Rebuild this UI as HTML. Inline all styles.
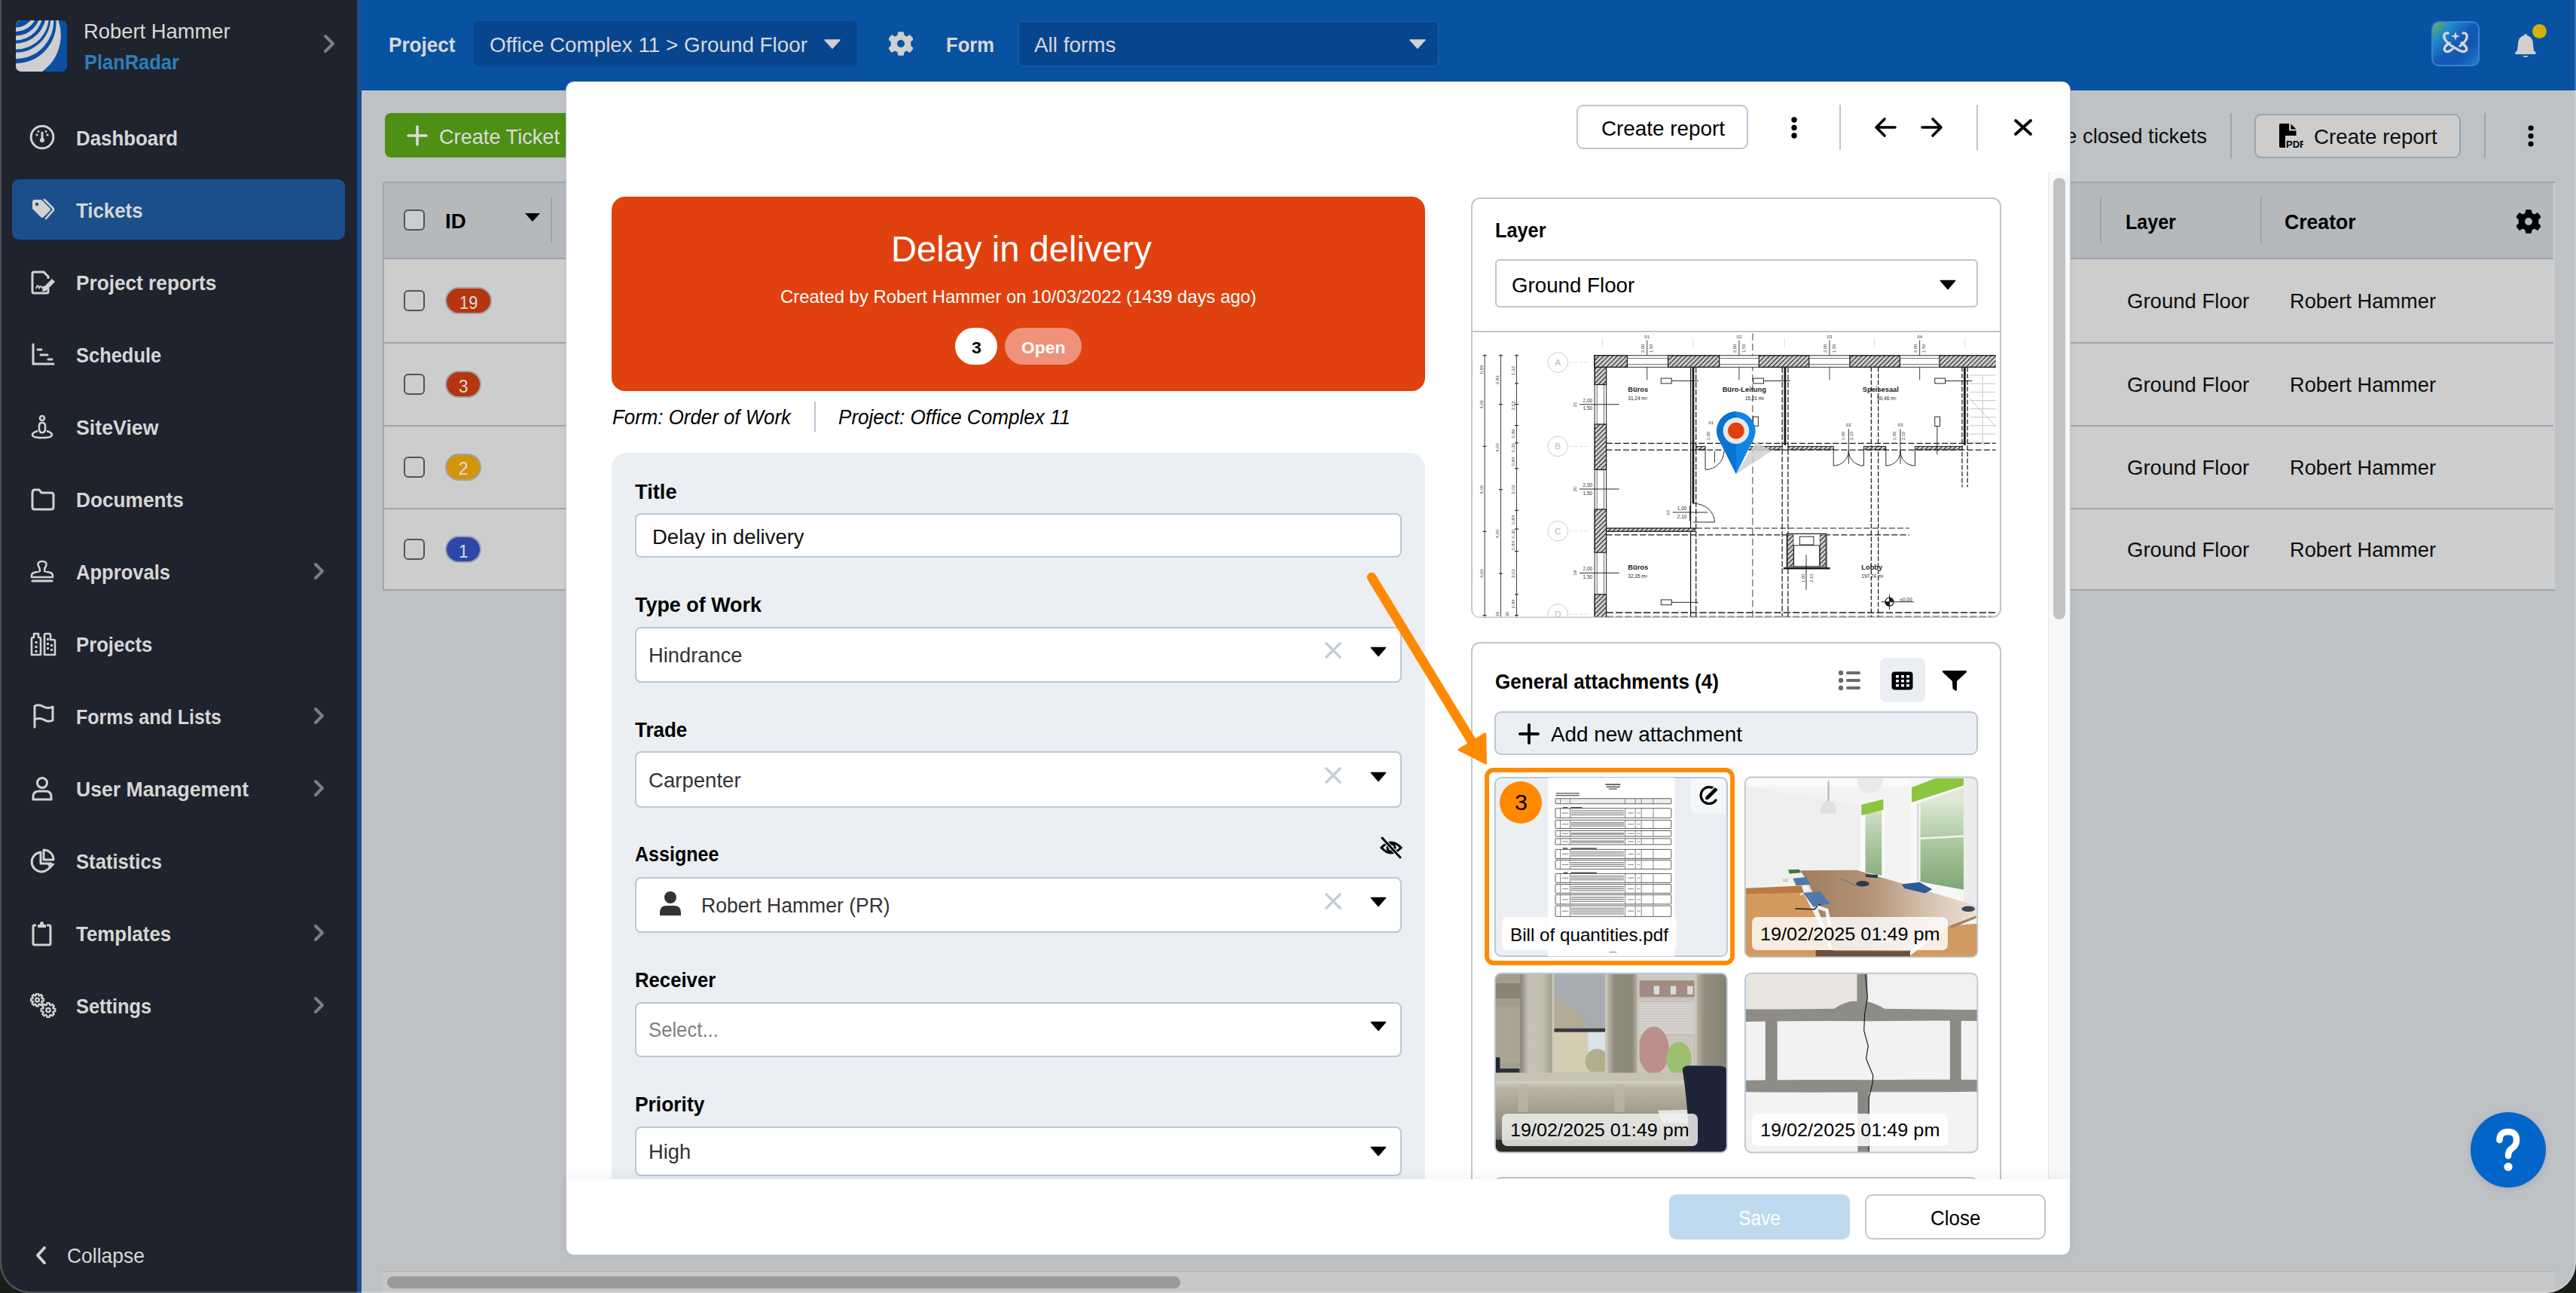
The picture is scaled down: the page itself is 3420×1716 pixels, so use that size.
<!DOCTYPE html>
<html><head><meta charset="utf-8"><style>
html,body{margin:0;padding:0;}
body{width:3420px;height:1716px;overflow:hidden;position:relative;background:#1b1d17;font-family:"Liberation Sans", sans-serif;}
.a{position:absolute;box-sizing:border-box;}
.t{position:absolute;white-space:nowrap;transform-origin:left top;}
</style></head><body>
<div class="a" style="left:0;top:0;width:3420px;height:1716px;background:#bec2c5;border-radius:0 0 40px 40px;overflow:hidden;">
<div class="a" style="left:0px;top:0px;width:474px;height:1716px;background:#1f232d;"></div>
<div class="a" style="left:474px;top:0px;width:6px;height:1716px;background:#184f8c;"></div>
<div class="a" style="left:480px;top:0px;width:2940px;height:120px;background:#0852a2;"></div>
<svg class="a" style="left:21px;top:27px;" width="68" height="68" viewBox="0 0 68 68"><defs><clipPath id="lg"><rect x="0" y="0" width="68" height="68" rx="7"/></clipPath></defs><g clip-path="url(#lg)"><rect width="68" height="68" fill="#0a4fa3"/><circle cx="0" cy="19.5" r="59.8" fill="#cfcfcf"/><circle cx="0" cy="3.6" r="53.6" fill="#0a4fa3"/><circle cx="0" cy="0.9" r="50.2" fill="#cfcfcf"/><circle cx="0" cy="-3.76" r="46.5" fill="#0a4fa3"/><circle cx="0" cy="-5.4" r="43.9" fill="#cfcfcf"/><circle cx="0" cy="-9.56" r="40.2" fill="#0a4fa3"/><circle cx="0" cy="-8.96" r="35.4" fill="#cfcfcf"/><circle cx="0" cy="-12.3" r="32.7" fill="#0a4fa3"/><circle cx="0" cy="-13.2" r="28.2" fill="#cfcfcf"/><circle cx="0" cy="-15.7" r="25.2" fill="#0a4fa3"/></g></svg>
<div class="t" id="t0" style="left:111.0px;top:28.0px;font-size:28px;line-height:28px;font-weight:400;color:#d8d8d8;transform:scaleX(0.9770);">Robert Hammer</div>
<div class="t" id="t1" style="left:111.8px;top:69.0px;font-size:28px;line-height:28px;font-weight:700;color:#2a80bb;transform:scaleX(0.9083);">PlanRadar</div>
<svg class="a" style="left:424px;top:44px;" width="26" height="28" viewBox="0 0 26 28"><path d="M8 4 L18 14 L8 24" fill="none" stroke="#7b7e86" stroke-width="4" stroke-linecap="round" stroke-linejoin="round"/></svg>
<div class="a" style="left:16px;top:238px;width:442px;height:80px;background:#1a4f8c;border-radius:9px;"></div>
<svg class="a" style="left:39px;top:165.5px;" width="36" height="34" viewBox="0 0 34 34"><circle cx="16" cy="16" r="14.8" fill="none" stroke="#d2d2d2" stroke-width="3"/><line x1="16" y1="10" x2="16" y2="19" stroke="#d2d2d2" stroke-width="3" stroke-linecap="round"/><circle cx="16" cy="20" r="3" fill="#d2d2d2"/><circle cx="9" cy="13" r="1.6" fill="#d2d2d2"/><circle cx="23" cy="13" r="1.6" fill="#d2d2d2"/><circle cx="11" cy="8.5" r="1.4" fill="#d2d2d2"/><circle cx="21" cy="8.5" r="1.4" fill="#d2d2d2"/></svg>
<div class="t" id="t2" style="left:100.6px;top:169.8px;font-size:28px;line-height:28px;font-weight:700;color:#d6d6d6;transform:scaleX(0.9231);">Dashboard</div>
<svg class="a" style="left:39px;top:261.5px;" width="36" height="34" viewBox="0 0 34 34"><path d="M3 6 Q3 3 6 3 L15 3 L26 14 Q28 16 26 18 L18 26 Q16 28 14 26 L3 15 Z" fill="#d2d2d2"/><circle cx="9" cy="9" r="2.2" fill="#1a4f8c"/><path d="M19 3 L30 14 Q32 16 30 18 L21 28" fill="none" stroke="#d2d2d2" stroke-width="2.6" stroke-linecap="round"/></svg>
<div class="t" id="t3" style="left:100.6px;top:265.8px;font-size:28px;line-height:28px;font-weight:700;color:#d6d6d6;transform:scaleX(0.9229);">Tickets</div>
<svg class="a" style="left:39px;top:357.5px;" width="36" height="34" viewBox="0 0 34 34"><path d="M18 3 L5 3 Q3 3 3 5 L3 29 Q3 31 5 31 L22 31 Q24 31 24 29 L24 25" fill="none" stroke="#d2d2d2" stroke-width="3" stroke-linecap="round"/><path d="M18 3 L24 9 L24 12" fill="none" stroke="#d2d2d2" stroke-width="3"/><path d="M8 25 Q10 18 12 24 Q14 20 16 24 L19 22" fill="none" stroke="#d2d2d2" stroke-width="2"/><path d="M17 24 L29 12 L33 16 L21 28 L16 29 Z" fill="#d2d2d2"/></svg>
<div class="t" id="t4" style="left:100.6px;top:361.8px;font-size:28px;line-height:28px;font-weight:700;color:#d6d6d6;transform:scaleX(0.9359);">Project reports</div>
<svg class="a" style="left:39px;top:453.5px;" width="36" height="34" viewBox="0 0 34 34"><path d="M4 3 L4 29 L31 29" fill="none" stroke="#d2d2d2" stroke-width="3" stroke-linecap="round"/><line x1="10" y1="10" x2="15" y2="10" stroke="#d2d2d2" stroke-width="3" stroke-linecap="round"/><line x1="14" y1="17" x2="23" y2="17" stroke="#d2d2d2" stroke-width="3" stroke-linecap="round"/><line x1="24" y1="23" x2="29" y2="23" stroke="#d2d2d2" stroke-width="3" stroke-linecap="round"/></svg>
<div class="t" id="t5" style="left:100.6px;top:457.8px;font-size:28px;line-height:28px;font-weight:700;color:#d6d6d6;transform:scaleX(0.9094);">Schedule</div>
<svg class="a" style="left:39px;top:549.5px;" width="36" height="34" viewBox="0 0 34 34"><circle cx="16" cy="5" r="3" fill="none" stroke="#d2d2d2" stroke-width="2.6"/><path d="M12 21 L12 15 Q12 11 16 11 Q20 11 20 15 L20 21 L18 24 L14 24 Z" fill="none" stroke="#d2d2d2" stroke-width="2.6"/><path d="M10 22 Q3 24 3 27 Q3 31 16 31 Q29 31 29 27 Q29 24 22 22" fill="none" stroke="#d2d2d2" stroke-width="2.6"/></svg>
<div class="t" id="t6" style="left:100.6px;top:553.8px;font-size:28px;line-height:28px;font-weight:700;color:#d6d6d6;transform:scaleX(0.9550);">SiteView</div>
<svg class="a" style="left:39px;top:645.5px;" width="36" height="34" viewBox="0 0 34 34"><path d="M3 8 Q3 4 6 4 L12 4 L15 8 L28 8 Q31 8 31 11 L31 27 Q31 30 28 30 L6 30 Q3 30 3 27 Z" fill="none" stroke="#d2d2d2" stroke-width="3" stroke-linejoin="round"/></svg>
<div class="t" id="t7" style="left:100.6px;top:649.8px;font-size:28px;line-height:28px;font-weight:700;color:#d6d6d6;transform:scaleX(0.9372);">Documents</div>
<svg class="a" style="left:39px;top:741.5px;" width="36" height="34" viewBox="0 0 34 34"><path d="M13 16 Q13 12 11 9 Q9 3 16 3 Q23 3 21 9 Q19 12 19 16 L27 18 Q30 19 30 22 L30 24 L2 24 L2 22 Q2 19 5 18 Z" fill="none" stroke="#d2d2d2" stroke-width="2.6" stroke-linejoin="round"/><line x1="3" y1="29" x2="29" y2="29" stroke="#d2d2d2" stroke-width="3" stroke-linecap="round"/></svg>
<div class="t" id="t8" style="left:100.6px;top:745.8px;font-size:28px;line-height:28px;font-weight:700;color:#d6d6d6;transform:scaleX(0.9136);">Approvals</div>
<svg class="a" style="left:410px;top:745.5px;" width="26" height="26" viewBox="0 0 26 26"><path d="M9 3 L18 12 L9 21" fill="none" stroke="#7b7e86" stroke-width="4" stroke-linecap="round" stroke-linejoin="round"/></svg>
<svg class="a" style="left:39px;top:837.5px;" width="36" height="34" viewBox="0 0 34 34"><path d="M2 31 L2 10 Q2 8 4 8 L5 8 L5 3 L11 3 L11 8 L12 8 Q14 8 14 10 L14 31 Z" fill="none" stroke="#d2d2d2" stroke-width="2.6" stroke-linejoin="round"/><path d="M19 31 L19 5 Q19 3 21 3 L25 3 Q27 3 27 5 L27 11 L31 11 Q33 11 33 13 L33 31 Z" fill="none" stroke="#d2d2d2" stroke-width="2.6" stroke-linejoin="round"/><g fill="#d2d2d2"><rect x="6.5" y="13" width="3" height="3"/><rect x="6.5" y="19" width="3" height="3"/><rect x="6.5" y="25" width="3" height="3"/><rect x="22" y="9" width="3" height="3"/><rect x="22" y="15" width="3" height="3"/><rect x="22" y="21" width="3" height="3"/><rect x="27" y="17" width="3" height="3"/><rect x="27" y="23" width="3" height="3"/></g></svg>
<div class="t" id="t9" style="left:100.6px;top:841.8px;font-size:28px;line-height:28px;font-weight:700;color:#d6d6d6;transform:scaleX(0.9176);">Projects</div>
<svg class="a" style="left:39px;top:933.5px;" width="36" height="34" viewBox="0 0 34 34"><path d="M6 31 L6 3 Q12 0 18 4 Q24 7 30 4 L30 22 Q24 25 18 21 Q12 18 6 21" fill="none" stroke="#d2d2d2" stroke-width="3" stroke-linecap="round" stroke-linejoin="round"/></svg>
<div class="t" id="t10" style="left:100.6px;top:937.8px;font-size:28px;line-height:28px;font-weight:700;color:#d6d6d6;transform:scaleX(0.8924);">Forms and Lists</div>
<svg class="a" style="left:410px;top:937.5px;" width="26" height="26" viewBox="0 0 26 26"><path d="M9 3 L18 12 L9 21" fill="none" stroke="#7b7e86" stroke-width="4" stroke-linecap="round" stroke-linejoin="round"/></svg>
<svg class="a" style="left:39px;top:1029.5px;" width="36" height="34" viewBox="0 0 34 34"><circle cx="16" cy="9" r="6.5" fill="none" stroke="#d2d2d2" stroke-width="3"/><path d="M4 31 L4 27 Q4 20 12 20 L20 20 Q28 20 28 27 L28 31 Z" fill="none" stroke="#d2d2d2" stroke-width="3" stroke-linejoin="round"/></svg>
<div class="t" id="t11" style="left:100.6px;top:1033.8px;font-size:28px;line-height:28px;font-weight:700;color:#d6d6d6;transform:scaleX(0.9499);">User Management</div>
<svg class="a" style="left:410px;top:1033.5px;" width="26" height="26" viewBox="0 0 26 26"><path d="M9 3 L18 12 L9 21" fill="none" stroke="#7b7e86" stroke-width="4" stroke-linecap="round" stroke-linejoin="round"/></svg>
<svg class="a" style="left:39px;top:1125.5px;" width="36" height="34" viewBox="0 0 34 34"><path d="M14 5 A13 13 0 1 0 28 20 L14 20 Z" fill="none" stroke="#d2d2d2" stroke-width="3" stroke-linejoin="round"/><path d="M18 2 A13 13 0 0 1 31 15 L18 15 Z" fill="none" stroke="#d2d2d2" stroke-width="3" stroke-linejoin="round"/><path d="M22 20 L33 20 L27 27 Z" fill="#d2d2d2"/></svg>
<div class="t" id="t12" style="left:100.6px;top:1129.8px;font-size:28px;line-height:28px;font-weight:700;color:#d6d6d6;transform:scaleX(0.9157);">Statistics</div>
<svg class="a" style="left:39px;top:1221.5px;" width="36" height="34" viewBox="0 0 34 34"><path d="M8 6 L5 6 Q4 6 4 8 L4 30 Q4 32 6 32 L25 32 Q27 32 27 30 L27 8 Q27 6 25 6 L22 6" fill="none" stroke="#d2d2d2" stroke-width="3"/><path d="M10 9 L10 5 L13 5 Q13 1 15.5 1 Q18 1 18 5 L21 5 L21 9 Z" fill="#d2d2d2"/></svg>
<div class="t" id="t13" style="left:100.6px;top:1225.8px;font-size:28px;line-height:28px;font-weight:700;color:#d6d6d6;transform:scaleX(0.9251);">Templates</div>
<svg class="a" style="left:410px;top:1225.5px;" width="26" height="26" viewBox="0 0 26 26"><path d="M9 3 L18 12 L9 21" fill="none" stroke="#7b7e86" stroke-width="4" stroke-linecap="round" stroke-linejoin="round"/></svg>
<svg class="a" style="left:39px;top:1317.5px;" width="36" height="34" viewBox="0 0 34 34"><g fill="none" stroke="#d2d2d2" stroke-width="2.3" stroke-linejoin="round"><path d="M15.43 7.18 L17.87 7.51 L17.87 10.49 L15.43 10.82 L14.98 11.90 L16.47 13.86 L14.36 15.97 L12.40 14.48 L11.32 14.93 L10.99 17.37 L8.01 17.37 L7.68 14.93 L6.60 14.48 L4.64 15.97 L2.53 13.86 L4.02 11.90 L3.57 10.82 L1.13 10.49 L1.13 7.51 L3.57 7.18 L4.02 6.10 L2.53 4.14 L4.64 2.03 L6.60 3.52 L7.68 3.07 L8.01 0.63 L10.99 0.63 L11.32 3.07 L12.40 3.52 L14.36 2.03 L16.47 4.14 L14.98 6.10 Z"/><circle cx="9.5" cy="9" r="2.4"/><path d="M30.69 20.44 L33.35 20.83 L33.35 24.17 L30.69 24.56 L30.19 25.78 L31.79 27.93 L29.43 30.29 L27.28 28.69 L26.06 29.19 L25.67 31.85 L22.33 31.85 L21.94 29.19 L20.72 28.69 L18.57 30.29 L16.21 27.93 L17.81 25.78 L17.31 24.56 L14.65 24.17 L14.65 20.83 L17.31 20.44 L17.81 19.22 L16.21 17.07 L18.57 14.71 L20.72 16.31 L21.94 15.81 L22.33 13.15 L25.67 13.15 L26.06 15.81 L27.28 16.31 L29.43 14.71 L31.79 17.07 L30.19 19.22 Z"/><circle cx="24" cy="22.5" r="2.7"/></g></svg>
<div class="t" id="t14" style="left:100.6px;top:1321.8px;font-size:28px;line-height:28px;font-weight:700;color:#d6d6d6;transform:scaleX(0.9070);">Settings</div>
<svg class="a" style="left:410px;top:1321.5px;" width="26" height="26" viewBox="0 0 26 26"><path d="M9 3 L18 12 L9 21" fill="none" stroke="#7b7e86" stroke-width="4" stroke-linecap="round" stroke-linejoin="round"/></svg>
<svg class="a" style="left:42px;top:1652px;" width="26" height="28" viewBox="0 0 26 28"><path d="M17 4 L8 14 L17 24" fill="none" stroke="#d2d2d2" stroke-width="4" stroke-linecap="round" stroke-linejoin="round"/></svg>
<div class="t" id="t15" style="left:88.5px;top:1653.1px;font-size:28px;line-height:28px;font-weight:400;color:#d6d6d6;transform:scaleX(0.9444);">Collapse</div>
<div class="t" id="t16" style="left:515.6px;top:46.3px;font-size:28px;line-height:28px;font-weight:700;color:#d8d8d8;transform:scaleX(0.9311);">Project</div>
<div class="a" style="left:629px;top:28px;width:509px;height:60px;background:#08458f;border-radius:6px;"></div>
<div class="t" id="t17" style="left:650.0px;top:45.8px;font-size:28px;line-height:28px;font-weight:400;color:#d8d8d8;transform:scaleX(0.9939);">Office Complex 11 &gt; Ground Floor</div>
<svg class="a" style="left:1094px;top:52px;" width="22" height="14" viewBox="0 0 22 14"><path d="M1 1 L21 1 L11 12 Z" fill="#d0d0d0" stroke="#d0d0d0" stroke-width="1.5" stroke-linejoin="round"/></svg>
<svg class="a" style="left:1180px;top:42px;" width="32" height="32" viewBox="0 0 32 32"><g transform="translate(16,16)"><path d="M-3 -15 L3 -15 L4 -10.5 L8 -8.5 L12 -11 L16 -6 L12.5 -3 L12.5 3 L16 6 L12 11 L8 8.5 L4 10.5 L3 15 L-3 15 L-4 10.5 L-8 8.5 L-12 11 L-16 6 L-12.5 3 L-12.5 -3 L-16 -6 L-12 -11 L-8 -8.5 L-4 -10.5 Z" fill="#d0d0d0" stroke="#d0d0d0" stroke-width="1.5" stroke-linejoin="round"/><circle r="5" fill="#0a52a3"/></g></svg>
<div class="t" id="t18" style="left:1256.0px;top:46.3px;font-size:28px;line-height:28px;font-weight:700;color:#d8d8d8;transform:scaleX(0.9143);">Form</div>
<div class="a" style="left:1352px;top:28px;width:558px;height:60px;background:#08458f;border:1.5px solid #1f5ea8;border-radius:6px;"></div>
<div class="t" id="t19" style="left:1373.0px;top:45.8px;font-size:28px;line-height:28px;font-weight:400;color:#d8d8d8;transform:scaleX(0.9954);">All forms</div>
<svg class="a" style="left:1871px;top:52px;" width="22" height="14" viewBox="0 0 22 14"><path d="M1 1 L21 1 L11 12 Z" fill="#d0d0d0" stroke="#d0d0d0" stroke-width="1.5" stroke-linejoin="round"/></svg>
<div class="a" style="left:3228px;top:28px;width:64px;height:60px;background:linear-gradient(135deg,#6bb552 0%,#1e88cf 25%,#1259b5 50%,#1259b5 72%,#1f7ccc 100%);border:2px solid #3d7fd5;border-radius:10px;"></div>
<svg class="a" style="left:3240px;top:38px;" width="40" height="40" viewBox="0 0 40 40"><g fill="none" stroke="#d6d6d6" stroke-width="3.4" stroke-linecap="round"><path d="M10 6 Q4 5 5 12 Q7 19 20 26 Q31 33 34 29 Q37 25 28 19"/><path d="M30 6 Q36 5 35 12 Q34 17 26 23 M16 27 Q9 33 6 29 Q3 25 12 19"/></g><path d="M20 4 L21.5 8.5 L26 10 L21.5 11.5 L20 16 L18.5 11.5 L14 10 L18.5 8.5 Z" fill="#d6d6d6"/></svg>
<svg class="a" style="left:3337px;top:42px;" width="32" height="34" viewBox="0 0 32 34"><path d="M16 3 Q18 3 18 5 Q26 7 26 17 L27 25 L30 28 Q30 30 28 30 L4 30 Q2 30 2 28 L5 25 L6 17 Q6 7 14 5 Q14 3 16 3 Z" fill="#d0d0d0"/><path d="M12 32 Q16 36 20 32 Z" fill="#d0d0d0"/></svg>
<div class="a" style="left:3362px;top:32px;width:19px;height:19px;border-radius:50%;background:#d2b10c;"></div>
<div class="a" style="left:510.6px;top:150px;width:320px;height:59px;background:#4e8f16;border-radius:8px;"></div>
<svg class="a" style="left:540px;top:166px;" width="28" height="28" viewBox="0 0 28 28"><path d="M14 2 L14 26 M2 14 L26 14" stroke="#dcdcdc" stroke-width="3.6" stroke-linecap="round"/></svg>
<div class="t" id="t20" style="left:582.7px;top:168.0px;font-size:28px;line-height:28px;font-weight:400;color:#dcdcdc;transform:scaleX(0.9700);">Create Ticket</div>
<div class="a" style="left:508px;top:241px;width:2884px;height:543px;background:#cdcdcd;border:2px solid #9aa5b0;border-right:none;border-top-left-radius:4px;"></div>
<div class="a" style="left:510px;top:243px;width:2880px;height:99px;background:#b5b9bc;"></div>
<div class="a" style="left:510px;top:342px;width:2880px;height:2px;background:#9aa5b0;"></div>
<div class="a" style="left:510px;top:454px;width:2880px;height:2px;background:#9aa5b0;"></div>
<div class="a" style="left:510px;top:564px;width:2880px;height:2px;background:#9aa5b0;"></div>
<div class="a" style="left:510px;top:673.5px;width:2880px;height:2px;background:#9aa5b0;"></div>
<div class="a" style="left:536px;top:278px;width:28px;height:28px;border:2.5px solid #4b5560;border-radius:6px;background:#cdcdcd;"></div>
<div class="t" id="t21" style="left:591.4px;top:280.3px;font-size:28px;line-height:28px;font-weight:700;color:#000;transform:scaleX(0.9893);">ID</div>
<svg class="a" style="left:696px;top:282px;" width="22" height="13" viewBox="0 0 22 13"><path d="M1 1 L21 1 L11 12 Z" fill="#000"/></svg>
<div class="a" style="left:730.5px;top:262px;width:2px;height:60px;background:#9aa5b0;"></div>
<div class="a" style="left:2787.5px;top:262px;width:2px;height:60px;background:#9aa5b0;"></div>
<div class="a" style="left:3001px;top:262px;width:2px;height:60px;background:#9aa5b0;"></div>
<div class="t" id="t22" style="left:2821.6px;top:280.5px;font-size:28px;line-height:28px;font-weight:700;color:#000;transform:scaleX(0.8940);">Layer</div>
<div class="t" id="t23" style="left:3033.2px;top:280.5px;font-size:28px;line-height:28px;font-weight:700;color:#000;transform:scaleX(0.9499);">Creator</div>
<svg class="a" style="left:3341px;top:278px;" width="32" height="32" viewBox="0 0 32 32"><g transform="translate(16,16)"><path d="M-3 -15 L3 -15 L4 -10.5 L8 -8.5 L12 -11 L16 -6 L12.5 -3 L12.5 3 L16 6 L12 11 L8 8.5 L4 10.5 L3 15 L-3 15 L-4 10.5 L-8 8.5 L-12 11 L-16 6 L-12.5 3 L-12.5 -3 L-16 -6 L-12 -11 L-8 -8.5 L-4 -10.5 Z" fill="#000" stroke="#000" stroke-width="1.5" stroke-linejoin="round"/><circle r="5" fill="#b5b9bc"/></g></svg>
<div class="a" style="left:536px;top:385.0px;width:28px;height:28px;border:2.5px solid #4b5560;border-radius:6px;background:transparent;"></div>
<div class="a" style="left:590.5px;top:381.0px;width:62.5px;height:36px;background:#b5350d;border:2px solid #9aa3ad;border-radius:18px;"></div>
<div class="t" id="t24" style="left:609.5px;top:389.7px;font-size:24px;line-height:24px;font-weight:400;color:#dcdcdc;transform:scaleX(0.9138);">19</div>
<div class="t" id="t25" style="left:2823.7px;top:386.3px;font-size:28px;line-height:28px;font-weight:400;color:#0e0e0e;transform:scaleX(0.9832);">Ground Floor</div>
<div class="t" id="t26" style="left:3039.7px;top:386.3px;font-size:28px;line-height:28px;font-weight:400;color:#0e0e0e;transform:scaleX(0.9740);">Robert Hammer</div>
<div class="a" style="left:536px;top:496.0px;width:28px;height:28px;border:2.5px solid #4b5560;border-radius:6px;background:transparent;"></div>
<div class="a" style="left:590.5px;top:492.0px;width:48.5px;height:36px;background:#b5350d;border:2px solid #9aa3ad;border-radius:18px;"></div>
<div class="t" id="t27" style="left:608.5px;top:500.7px;font-size:24px;line-height:24px;font-weight:400;color:#dcdcdc;transform:scaleX(0.9357);">3</div>
<div class="t" id="t28" style="left:2823.7px;top:497.3px;font-size:28px;line-height:28px;font-weight:400;color:#0e0e0e;transform:scaleX(0.9832);">Ground Floor</div>
<div class="t" id="t29" style="left:3039.7px;top:497.3px;font-size:28px;line-height:28px;font-weight:400;color:#0e0e0e;transform:scaleX(0.9740);">Robert Hammer</div>
<div class="a" style="left:536px;top:605.75px;width:28px;height:28px;border:2.5px solid #4b5560;border-radius:6px;background:transparent;"></div>
<div class="a" style="left:590.5px;top:601.75px;width:48.5px;height:36px;background:#d4950b;border:2px solid #9aa3ad;border-radius:18px;"></div>
<div class="t" id="t30" style="left:608.5px;top:610.4px;font-size:24px;line-height:24px;font-weight:400;color:#dcdcdc;transform:scaleX(0.9357);">2</div>
<div class="t" id="t31" style="left:2823.7px;top:607.0px;font-size:28px;line-height:28px;font-weight:400;color:#0e0e0e;transform:scaleX(0.9832);">Ground Floor</div>
<div class="t" id="t32" style="left:3039.7px;top:607.0px;font-size:28px;line-height:28px;font-weight:400;color:#0e0e0e;transform:scaleX(0.9740);">Robert Hammer</div>
<div class="a" style="left:536px;top:715.0px;width:28px;height:28px;border:2.5px solid #4b5560;border-radius:6px;background:transparent;"></div>
<div class="a" style="left:590.5px;top:711.0px;width:48.5px;height:36px;background:#2e47a6;border:2px solid #9aa3ad;border-radius:18px;"></div>
<div class="t" id="t33" style="left:608.5px;top:719.7px;font-size:24px;line-height:24px;font-weight:400;color:#dcdcdc;transform:scaleX(0.9357);">1</div>
<div class="t" id="t34" style="left:2823.7px;top:716.3px;font-size:28px;line-height:28px;font-weight:400;color:#0e0e0e;transform:scaleX(0.9832);">Ground Floor</div>
<div class="t" id="t35" style="left:3039.7px;top:716.3px;font-size:28px;line-height:28px;font-weight:400;color:#0e0e0e;transform:scaleX(0.9740);">Robert Hammer</div>
<div class="t" id="t36" style="left:2742.0px;top:167.3px;font-size:28px;line-height:28px;font-weight:400;color:#0e0e0e;transform:scaleX(0.9821);">e closed tickets</div>
<div class="a" style="left:2960.7px;top:150px;width:2px;height:60px;background:#9aa5b0;"></div>
<div class="a" style="left:2993.4px;top:150.6px;width:274px;height:59px;background:#cdcdcd;border:2px solid #98a4b0;border-radius:9px;"></div>
<svg class="a" style="left:3024px;top:163px;" width="34" height="34" viewBox="0 0 34 34"><path d="M2 3 Q2 1 4 1 L15 1 L15 10.5 L24.5 10.5 L24.5 17 L10 17 L10 33 L4 33 Q2 33 2 31 Z" fill="#000"/><path d="M17.5 1.5 L24.5 8.5 L17.5 8.5 Z" fill="#000"/><text x="11" y="33" font-family="Liberation Sans" font-weight="700" font-size="13" fill="#000">PDF</text></svg>
<div class="t" id="t37" style="left:3072.0px;top:168.0px;font-size:28px;line-height:28px;font-weight:400;color:#0e0e0e;transform:scaleX(0.9929);">Create report</div>
<div class="a" style="left:3298px;top:150px;width:2px;height:60px;background:#9aa5b0;"></div>
<svg class="a" style="left:3354px;top:166px;" width="12" height="30" viewBox="0 0 12 30"><circle cx="6" cy="4" r="3.6" fill="#000"/><circle cx="6" cy="14.5" r="3.6" fill="#000"/><circle cx="6" cy="25" r="3.6" fill="#000"/></svg>
<div class="a" style="left:3280px;top:1476px;width:100px;height:100px;border-radius:50%;background:#0265c9;box-shadow:0 2px 8px rgba(0,0,0,0.12);"></div>
<svg class="a" style="left:3304px;top:1494px;" width="52" height="66" viewBox="0 0 52 66"><path d="M14.5 19 Q14.5 8 26 8 Q37 8 37 19 Q37 26 31 30 Q26 33 26 40" fill="none" stroke="#fff" stroke-width="8.5" stroke-linecap="round"/><circle cx="26" cy="54.5" r="5.6" fill="#fff"/></svg>
<div class="a" style="left:508px;top:1687px;width:2884px;height:29px;background:#c8c8c8;border-top:1px solid #b4b4b4;"></div>
<div class="a" style="left:514px;top:1694px;width:1053px;height:16px;background:#9a9a9a;border-radius:8px;"></div>
<div class="a" style="left:750.5px;top:107.5px;width:1998px;height:1558px;background:#fff;border:1.5px solid #bcc6d1;border-radius:11px;box-shadow:0 2px 8px rgba(0,0,0,0.04);"></div>
<div class="a" style="left:2093px;top:139px;width:228px;height:59px;border:2px solid #bac7d4;border-radius:9px;background:#fff;"></div>
<div class="t" id="t38" style="left:2126.0px;top:157.3px;font-size:28px;line-height:28px;font-weight:400;color:#000;transform:scaleX(0.9941);">Create report</div>
<svg class="a" style="left:2376px;top:154px;" width="12" height="32" viewBox="0 0 12 32"><circle cx="6" cy="5" r="3.7" fill="#000"/><circle cx="6" cy="15.5" r="3.7" fill="#000"/><circle cx="6" cy="26" r="3.7" fill="#000"/></svg>
<div class="a" style="left:2442px;top:139px;width:2px;height:60px;background:#bac7d4;"></div>
<svg class="a" style="left:2486px;top:153px;" width="36" height="32" viewBox="0 0 36 32"><path d="M30 16 L5 16 M16 5 L5 16 L16 27" fill="none" stroke="#000" stroke-width="3.6" stroke-linecap="round" stroke-linejoin="round"/></svg>
<svg class="a" style="left:2546px;top:153px;" width="36" height="32" viewBox="0 0 36 32"><path d="M6 16 L31 16 M20 5 L31 16 L20 27" fill="none" stroke="#000" stroke-width="3.6" stroke-linecap="round" stroke-linejoin="round"/></svg>
<div class="a" style="left:2624px;top:139px;width:2px;height:60px;background:#bac7d4;"></div>
<svg class="a" style="left:2672px;top:156px;" width="28" height="26" viewBox="0 0 28 26"><path d="M4 4 L24 22 M24 4 L4 22" fill="none" stroke="#000" stroke-width="3.8" stroke-linecap="round"/></svg>
<div class="a" style="left:2719px;top:229px;width:29px;height:1336px;background:#f8f8f8;border-left:1px solid #e6e6e6;"></div>
<div class="a" style="left:2726px;top:236px;width:16px;height:586px;background:#c2c2c2;border-radius:8px;"></div>
<div class="a" style="left:812px;top:261px;width:1080px;height:257.5px;background:#e0410e;border-radius:18px;"></div>
<div class="t" id="t39" style="left:1183.0px;top:307.0px;font-size:48px;line-height:48px;font-weight:400;color:#fff;transform:scaleX(0.9825);">Delay in delivery</div>
<div class="t" id="t40" style="left:1036.0px;top:381.7px;font-size:24px;line-height:24px;font-weight:400;color:#fff;transform:scaleX(0.9952);">Created by Robert Hammer on 10/03/2022 (1439 days ago)</div>
<div class="a" style="left:1268px;top:435px;width:56px;height:49px;background:#fff;border-radius:25px;"></div>
<div class="t" id="t41" style="left:1289.5px;top:450.7px;font-size:22px;line-height:22px;font-weight:700;color:#000;transform:scaleX(1.0612);">3</div>
<div class="a" style="left:1334px;top:435px;width:102px;height:49px;background:#f0917a;border-radius:25px;"></div>
<div class="t" id="t42" style="left:1355.8px;top:451.4px;font-size:22px;line-height:22px;font-weight:700;color:#fff;transform:scaleX(1.0403);">Open</div>
<div class="t" id="t43" style="left:813.0px;top:540.3px;font-size:28px;line-height:28px;font-weight:400;color:#000;font-style:italic;transform:scaleX(0.9232);">Form: Order of Work</div>
<div class="a" style="left:1081px;top:533px;width:2px;height:40px;background:#bac7d4;"></div>
<div class="t" id="t44" style="left:1113.0px;top:540.3px;font-size:28px;line-height:28px;font-weight:400;color:#000;font-style:italic;transform:scaleX(0.9306);">Project: Office Complex 11</div>
<div class="a" style="left:752px;top:229px;width:1967px;height:1336px;overflow:hidden;">
<div class="a" style="left:60px;top:371.70000000000005px;width:1080px;height:1100px;background:#ebeff3;border-radius:20px;"></div>
</div>
<div class="t" id="t45" style="left:842.6px;top:639.3px;font-size:28px;line-height:28px;font-weight:700;color:#000;transform:scaleX(0.9744);">Title</div>
<div class="a" style="left:843px;top:681px;width:1018px;height:59px;background:#fff;border:2px solid #bac7d4;border-radius:8px;"></div>
<div class="t" id="t46" style="left:866.0px;top:699.3px;font-size:28px;line-height:28px;font-weight:400;color:#111;transform:scaleX(0.9814);">Delay in delivery</div>
<div class="t" id="t47" style="left:842.6px;top:789.3px;font-size:28px;line-height:28px;font-weight:700;color:#000;transform:scaleX(0.9613);">Type of Work</div>
<div class="a" style="left:843px;top:832px;width:1018px;height:74px;background:#fff;border:2px solid #bac7d4;border-radius:8px;"></div>
<div class="t" id="t48" style="left:861.0px;top:856.3px;font-size:28px;line-height:28px;font-weight:400;color:#333;transform:scaleX(0.9754);">Hindrance</div>
<svg class="a" style="left:1758px;top:851px;" width="24" height="24" viewBox="0 0 24 24"><path d="M3 3 L21 21 M21 3 L3 21" stroke="#c3ced9" stroke-width="3.6" stroke-linecap="round"/></svg>
<svg class="a" style="left:1819px;top:858px;" width="22" height="14" viewBox="0 0 22 14"><path d="M1.5 1.5 L20.5 1.5 L11 12.5 Z" fill="#000" stroke="#000" stroke-width="1.6" stroke-linejoin="round"/></svg>
<div class="t" id="t49" style="left:842.6px;top:954.8px;font-size:28px;line-height:28px;font-weight:700;color:#000;transform:scaleX(0.9263);">Trade</div>
<div class="a" style="left:843px;top:997px;width:1018px;height:75px;background:#fff;border:2px solid #bac7d4;border-radius:8px;"></div>
<div class="t" id="t50" style="left:860.6px;top:1021.7px;font-size:28px;line-height:28px;font-weight:400;color:#333;transform:scaleX(0.9846);">Carpenter</div>
<svg class="a" style="left:1758px;top:1017px;" width="24" height="24" viewBox="0 0 24 24"><path d="M3 3 L21 21 M21 3 L3 21" stroke="#c3ced9" stroke-width="3.6" stroke-linecap="round"/></svg>
<svg class="a" style="left:1819px;top:1023.7px;" width="22" height="14" viewBox="0 0 22 14"><path d="M1.5 1.5 L20.5 1.5 L11 12.5 Z" fill="#000" stroke="#000" stroke-width="1.6" stroke-linejoin="round"/></svg>
<div class="t" id="t51" style="left:842.6px;top:1120.3px;font-size:28px;line-height:28px;font-weight:700;color:#000;transform:scaleX(0.8948);">Assignee</div>
<svg class="a" style="left:1831px;top:1110px;" width="32" height="30" viewBox="0 0 32 30"><g fill="none" stroke="#000" stroke-width="3.2"><path d="M3 15 Q16 1 29 15 Q16 29 3 15 Z"/><circle cx="16" cy="15" r="5"/></g><line x1="4" y1="2" x2="28" y2="28" stroke="#ebeff3" stroke-width="5"/><line x1="4" y1="2" x2="28" y2="28" stroke="#000" stroke-width="3" stroke-linecap="round"/></svg>
<div class="a" style="left:843px;top:1163.6px;width:1018px;height:74.40000000000009px;background:#fff;border:2px solid #bac7d4;border-radius:8px;"></div>
<svg class="a" style="left:874px;top:1182px;" width="32" height="34" viewBox="0 0 32 34"><circle cx="16" cy="9" r="8" fill="#333"/><path d="M2 33 L2 29 Q2 20 11 20 L21 20 Q30 20 30 29 L30 33 Z" fill="#333"/></svg>
<div class="t" id="t52" style="left:931.0px;top:1188.1px;font-size:28px;line-height:28px;font-weight:400;color:#333;transform:scaleX(0.9479);">Robert Hammer (PR)</div>
<svg class="a" style="left:1758px;top:1183.7px;" width="24" height="24" viewBox="0 0 24 24"><path d="M3 3 L21 21 M21 3 L3 21" stroke="#c3ced9" stroke-width="3.6" stroke-linecap="round"/></svg>
<svg class="a" style="left:1819px;top:1189.5px;" width="22" height="14" viewBox="0 0 22 14"><path d="M1.5 1.5 L20.5 1.5 L11 12.5 Z" fill="#000" stroke="#000" stroke-width="1.6" stroke-linejoin="round"/></svg>
<div class="t" id="t53" style="left:842.6px;top:1286.7px;font-size:28px;line-height:28px;font-weight:700;color:#000;transform:scaleX(0.9181);">Receiver</div>
<div class="a" style="left:843px;top:1329.6px;width:1018px;height:73.40000000000009px;background:#fff;border:2px solid #bac7d4;border-radius:8px;"></div>
<div class="t" id="t54" style="left:861.0px;top:1352.5px;font-size:28px;line-height:28px;font-weight:400;color:#808080;transform:scaleX(0.9173);">Select...</div>
<svg class="a" style="left:1819px;top:1355px;" width="22" height="14" viewBox="0 0 22 14"><path d="M1.5 1.5 L20.5 1.5 L11 12.5 Z" fill="#000" stroke="#000" stroke-width="1.6" stroke-linejoin="round"/></svg>
<div class="t" id="t55" style="left:842.6px;top:1452.3px;font-size:28px;line-height:28px;font-weight:700;color:#000;transform:scaleX(0.9426);">Priority</div>
<div class="a" style="left:843px;top:1495px;width:1018px;height:66px;background:#fff;border:2px solid #bac7d4;border-radius:8px;"></div>
<div class="t" id="t56" style="left:861.2px;top:1515.3px;font-size:28px;line-height:28px;font-weight:400;color:#333;transform:scaleX(0.9758);">High</div>
<svg class="a" style="left:1819px;top:1520.8px;" width="22" height="14" viewBox="0 0 22 14"><path d="M1.5 1.5 L20.5 1.5 L11 12.5 Z" fill="#000" stroke="#000" stroke-width="1.6" stroke-linejoin="round"/></svg>
<div class="a" style="left:1953px;top:262px;width:704px;height:558px;background:#fff;border:2px solid #bac7d4;border-radius:12px;"></div>
<div class="t" id="t57" style="left:1985.0px;top:291.9px;font-size:28px;line-height:28px;font-weight:700;color:#000;transform:scaleX(0.9034);">Layer</div>
<div class="a" style="left:1984.5px;top:343.6px;width:641px;height:64.4px;background:#fff;border:2px solid #bac7d4;border-radius:6px;"></div>
<div class="t" id="t58" style="left:2006.6px;top:364.6px;font-size:28px;line-height:28px;font-weight:400;color:#000;transform:scaleX(0.9893);">Ground Floor</div>
<svg class="a" style="left:2575px;top:371px;" width="22" height="14" viewBox="0 0 22 14"><path d="M1.5 1.5 L20.5 1.5 L11 12.5 Z" fill="#000" stroke="#000" stroke-width="1.6" stroke-linejoin="round"/></svg>
<div class="a" style="left:1955px;top:439px;width:700px;height:2px;background:#bac7d4;"></div>
<svg class="a" style="left:1950px;top:430px;" width="720" height="400" viewBox="0 0 2327 1293"><defs><clipPath id="pc"><path d="M16 36 L2262 36 L2262 1222 Q2262 1257 2227 1257 L51 1257 Q16 1257 16 1222 Z"/></clipPath></defs><g clip-path="url(#pc)"><rect x="0" y="0" width="2327" height="1293" fill="#fff"/><defs><pattern id="hat" width="14" height="14" patternUnits="userSpaceOnUse" patternTransform="rotate(45)"><rect width="14" height="14" fill="#cfcfcf"/><line x1="0" y1="0" x2="0" y2="14" stroke="#1a1a1a" stroke-width="7"/></pattern></defs><line x1="68" y1="130" x2="68" y2="1258" stroke="#333" stroke-width="3"/><line x1="137" y1="130" x2="137" y2="1258" stroke="#333" stroke-width="3"/><line x1="205" y1="130" x2="205" y2="1258" stroke="#333" stroke-width="3"/><line x1="60" y1="135" x2="76" y2="135" stroke="#333" stroke-width="4"/><line x1="60" y1="525" x2="76" y2="525" stroke="#333" stroke-width="4"/><line x1="60" y1="890" x2="76" y2="890" stroke="#333" stroke-width="4"/><line x1="60" y1="1250" x2="76" y2="1250" stroke="#333" stroke-width="4"/><line x1="129" y1="135" x2="145" y2="135" stroke="#333" stroke-width="4"/><line x1="129" y1="345" x2="145" y2="345" stroke="#333" stroke-width="4"/><line x1="129" y1="710" x2="145" y2="710" stroke="#333" stroke-width="4"/><line x1="129" y1="1070" x2="145" y2="1070" stroke="#333" stroke-width="4"/><line x1="197" y1="135" x2="213" y2="135" stroke="#333" stroke-width="4"/><line x1="197" y1="255" x2="213" y2="255" stroke="#333" stroke-width="4"/><line x1="197" y1="345" x2="213" y2="345" stroke="#333" stroke-width="4"/><line x1="197" y1="435" x2="213" y2="435" stroke="#333" stroke-width="4"/><line x1="197" y1="510" x2="213" y2="510" stroke="#333" stroke-width="4"/><line x1="197" y1="620" x2="213" y2="620" stroke="#333" stroke-width="4"/><line x1="197" y1="800" x2="213" y2="800" stroke="#333" stroke-width="4"/><line x1="197" y1="880" x2="213" y2="880" stroke="#333" stroke-width="4"/><line x1="197" y1="975" x2="213" y2="975" stroke="#333" stroke-width="4"/><line x1="197" y1="1160" x2="213" y2="1160" stroke="#333" stroke-width="4"/><line x1="197" y1="1250" x2="213" y2="1250" stroke="#333" stroke-width="4"/><text x="60" y="195" font-family="Liberation Sans" font-size="20" font-weight="400" fill="#444" text-anchor="middle" transform="rotate(-90 60 195)">0,55</text><text x="60" y="345" font-family="Liberation Sans" font-size="20" font-weight="400" fill="#444" text-anchor="middle" transform="rotate(-90 60 345)">4,00</text><text x="60" y="710" font-family="Liberation Sans" font-size="20" font-weight="400" fill="#444" text-anchor="middle" transform="rotate(-90 60 710)">4,00</text><text x="60" y="1070" font-family="Liberation Sans" font-size="20" font-weight="400" fill="#444" text-anchor="middle" transform="rotate(-90 60 1070)">4,00</text><text x="128" y="240" font-family="Liberation Sans" font-size="20" font-weight="400" fill="#444" text-anchor="middle" transform="rotate(-90 128 240)">2,83</text><text x="128" y="530" font-family="Liberation Sans" font-size="20" font-weight="400" fill="#444" text-anchor="middle" transform="rotate(-90 128 530)">4,00</text><text x="128" y="900" font-family="Liberation Sans" font-size="20" font-weight="400" fill="#444" text-anchor="middle" transform="rotate(-90 128 900)">4,00</text><text x="197" y="200" font-family="Liberation Sans" font-size="20" font-weight="400" fill="#444" text-anchor="middle" transform="rotate(-90 197 200)">1,32</text><text x="197" y="350" font-family="Liberation Sans" font-size="20" font-weight="400" fill="#444" text-anchor="middle" transform="rotate(-90 197 350)">2,02</text><text x="197" y="470" font-family="Liberation Sans" font-size="20" font-weight="400" fill="#444" text-anchor="middle" transform="rotate(-90 197 470)">0,86</text><text x="197" y="530" font-family="Liberation Sans" font-size="20" font-weight="400" fill="#444" text-anchor="middle" transform="rotate(-90 197 530)">0,30</text><text x="197" y="590" font-family="Liberation Sans" font-size="20" font-weight="400" fill="#444" text-anchor="middle" transform="rotate(-90 197 590)">0,84</text><text x="197" y="710" font-family="Liberation Sans" font-size="20" font-weight="400" fill="#444" text-anchor="middle" transform="rotate(-90 197 710)">2,02</text><text x="197" y="840" font-family="Liberation Sans" font-size="20" font-weight="400" fill="#444" text-anchor="middle" transform="rotate(-90 197 840)">0,84</text><text x="197" y="900" font-family="Liberation Sans" font-size="20" font-weight="400" fill="#444" text-anchor="middle" transform="rotate(-90 197 900)">0,30</text><text x="197" y="950" font-family="Liberation Sans" font-size="20" font-weight="400" fill="#444" text-anchor="middle" transform="rotate(-90 197 950)">0,84</text><text x="197" y="1070" font-family="Liberation Sans" font-size="20" font-weight="400" fill="#444" text-anchor="middle" transform="rotate(-90 197 1070)">2,02</text><text x="197" y="1200" font-family="Liberation Sans" font-size="20" font-weight="400" fill="#444" text-anchor="middle" transform="rotate(-90 197 1200)">0,84</text><text x="128" y="1245" font-family="Liberation Sans" font-size="20" font-weight="400" fill="#444" text-anchor="middle" transform="rotate(-90 128 1245)">16</text><text x="170" y="1245" font-family="Liberation Sans" font-size="20" font-weight="400" fill="#444" text-anchor="middle" transform="rotate(-90 170 1245)">30</text><circle cx="382" cy="165" r="43" fill="none" stroke="#c8c8c8" stroke-width="3"/><text x="382" y="178" font-family="Liberation Sans" font-size="38" font-weight="400" fill="#b8b8b8" text-anchor="middle">A</text><line x1="430" y1="165" x2="520" y2="165" stroke="#c8c8c8" stroke-width="2" stroke-dasharray="14 8"/><circle cx="382" cy="525" r="43" fill="none" stroke="#c8c8c8" stroke-width="3"/><text x="382" y="538" font-family="Liberation Sans" font-size="38" font-weight="400" fill="#b8b8b8" text-anchor="middle">B</text><line x1="430" y1="525" x2="520" y2="525" stroke="#c8c8c8" stroke-width="2" stroke-dasharray="14 8"/><circle cx="382" cy="888" r="43" fill="none" stroke="#c8c8c8" stroke-width="3"/><text x="382" y="901" font-family="Liberation Sans" font-size="38" font-weight="400" fill="#b8b8b8" text-anchor="middle">C</text><line x1="430" y1="888" x2="520" y2="888" stroke="#c8c8c8" stroke-width="2" stroke-dasharray="14 8"/><circle cx="382" cy="1245" r="43" fill="none" stroke="#c8c8c8" stroke-width="3"/><text x="382" y="1258" font-family="Liberation Sans" font-size="38" font-weight="400" fill="#b8b8b8" text-anchor="middle">D</text><line x1="430" y1="1245" x2="520" y2="1245" stroke="#c8c8c8" stroke-width="2" stroke-dasharray="14 8"/><line x1="573" y1="60" x2="573" y2="100" stroke="#c8c8c8" stroke-width="2"/><line x1="963" y1="60" x2="963" y2="100" stroke="#c8c8c8" stroke-width="2"/><line x1="1355" y1="60" x2="1355" y2="100" stroke="#c8c8c8" stroke-width="2"/><line x1="1740" y1="60" x2="1740" y2="100" stroke="#c8c8c8" stroke-width="2"/><line x1="2128" y1="60" x2="2128" y2="100" stroke="#c8c8c8" stroke-width="2"/><text x="765" y="62" font-family="Liberation Sans" font-size="20" font-weight="400" fill="#444" text-anchor="middle">01</text><line x1="765" y1="70" x2="765" y2="240" stroke="#333" stroke-width="3"/><text x="753" y="105" font-family="Liberation Sans" font-size="19" font-weight="400" fill="#444" text-anchor="middle" transform="rotate(-90 753 105)">2,00</text><text x="790" y="105" font-family="Liberation Sans" font-size="19" font-weight="400" fill="#444" text-anchor="middle" transform="rotate(-90 790 105)">1,50</text><text x="1160" y="62" font-family="Liberation Sans" font-size="20" font-weight="400" fill="#444" text-anchor="middle">02</text><line x1="1160" y1="70" x2="1160" y2="240" stroke="#333" stroke-width="3"/><text x="1148" y="105" font-family="Liberation Sans" font-size="19" font-weight="400" fill="#444" text-anchor="middle" transform="rotate(-90 1148 105)">2,00</text><text x="1185" y="105" font-family="Liberation Sans" font-size="19" font-weight="400" fill="#444" text-anchor="middle" transform="rotate(-90 1185 105)">1,50</text><text x="1548" y="62" font-family="Liberation Sans" font-size="20" font-weight="400" fill="#444" text-anchor="middle">03</text><line x1="1548" y1="70" x2="1548" y2="240" stroke="#333" stroke-width="3"/><text x="1536" y="105" font-family="Liberation Sans" font-size="19" font-weight="400" fill="#444" text-anchor="middle" transform="rotate(-90 1536 105)">2,00</text><text x="1573" y="105" font-family="Liberation Sans" font-size="19" font-weight="400" fill="#444" text-anchor="middle" transform="rotate(-90 1573 105)">1,50</text><text x="1935" y="62" font-family="Liberation Sans" font-size="20" font-weight="400" fill="#444" text-anchor="middle">04</text><line x1="1935" y1="70" x2="1935" y2="240" stroke="#333" stroke-width="3"/><text x="1923" y="105" font-family="Liberation Sans" font-size="19" font-weight="400" fill="#444" text-anchor="middle" transform="rotate(-90 1923 105)">2,00</text><text x="1960" y="105" font-family="Liberation Sans" font-size="19" font-weight="400" fill="#444" text-anchor="middle" transform="rotate(-90 1960 105)">1,50</text><line x1="1218" y1="40" x2="1218" y2="1258" stroke="#333" stroke-width="3" stroke-dasharray="30 14"/><rect x="540" y="135" width="50" height="1125" fill="#fff" stroke="#1a1a1a" stroke-width="3" /><line x1="550" y1="260" x2="550" y2="430" stroke="#1a1a1a" stroke-width="2"/><line x1="580" y1="260" x2="580" y2="430" stroke="#1a1a1a" stroke-width="2"/><line x1="550" y1="625" x2="550" y2="795" stroke="#1a1a1a" stroke-width="2"/><line x1="580" y1="625" x2="580" y2="795" stroke="#1a1a1a" stroke-width="2"/><line x1="550" y1="980" x2="550" y2="1160" stroke="#1a1a1a" stroke-width="2"/><line x1="580" y1="980" x2="580" y2="1160" stroke="#1a1a1a" stroke-width="2"/><rect x="540" y="135" width="50" height="125" fill="url(#hat)" stroke="#1a1a1a" stroke-width="4" /><rect x="540" y="430" width="50" height="195" fill="url(#hat)" stroke="#1a1a1a" stroke-width="4" /><rect x="540" y="795" width="50" height="185" fill="url(#hat)" stroke="#1a1a1a" stroke-width="4" /><rect x="540" y="1160" width="50" height="98" fill="url(#hat)" stroke="#1a1a1a" stroke-width="4" /><rect x="540" y="135" width="1760" height="50" fill="#fff" stroke="#1a1a1a" stroke-width="3" /><line x1="680" y1="147" x2="2280" y2="147" stroke="#1a1a1a" stroke-width="2"/><line x1="680" y1="173" x2="2280" y2="173" stroke="#1a1a1a" stroke-width="2"/><rect x="540" y="135" width="140" height="50" fill="url(#hat)" stroke="#1a1a1a" stroke-width="4" /><rect x="855" y="135" width="220" height="50" fill="url(#hat)" stroke="#1a1a1a" stroke-width="4" /><rect x="1245" y="135" width="215" height="50" fill="url(#hat)" stroke="#1a1a1a" stroke-width="4" /><rect x="1635" y="135" width="215" height="50" fill="url(#hat)" stroke="#1a1a1a" stroke-width="4" /><rect x="2020" y="135" width="270" height="50" fill="url(#hat)" stroke="#1a1a1a" stroke-width="4" /><line x1="952" y1="185" x2="952" y2="1258" stroke="#1a1a1a" stroke-width="4"/><line x1="975" y1="185" x2="975" y2="1258" stroke="#1a1a1a" stroke-width="4" stroke-dasharray="24 8"/><line x1="1345" y1="185" x2="1345" y2="1258" stroke="#1a1a1a" stroke-width="4" stroke-dasharray="24 8"/><line x1="1370" y1="185" x2="1370" y2="1258" stroke="#1a1a1a" stroke-width="4" stroke-dasharray="24 8"/><line x1="1727" y1="185" x2="1727" y2="1258" stroke="#1a1a1a" stroke-width="4" stroke-dasharray="20 8"/><line x1="1757" y1="185" x2="1757" y2="1258" stroke="#1a1a1a" stroke-width="4" stroke-dasharray="20 8"/><line x1="2117" y1="185" x2="2117" y2="700" stroke="#1a1a1a" stroke-width="4" stroke-dasharray="20 8"/><line x1="2140" y1="185" x2="2140" y2="700" stroke="#1a1a1a" stroke-width="4" stroke-dasharray="20 8"/><line x1="963" y1="185" x2="963" y2="770" stroke="#1a1a1a" stroke-width="9"/><line x1="1357" y1="185" x2="1357" y2="520" stroke="#1a1a1a" stroke-width="9"/><line x1="2128" y1="185" x2="2128" y2="520" stroke="#1a1a1a" stroke-width="9"/><line x1="590" y1="512" x2="2290" y2="512" stroke="#1a1a1a" stroke-width="4" stroke-dasharray="26 10"/><line x1="590" y1="540" x2="2290" y2="540" stroke="#1a1a1a" stroke-width="4" stroke-dasharray="26 10"/><rect x="975" y="525" width="40" height="14" fill="url(#hat)" stroke="#1a1a1a" stroke-width="3" /><rect x="1190" y="525" width="155" height="14" fill="url(#hat)" stroke="#1a1a1a" stroke-width="3" /><rect x="1370" y="525" width="195" height="14" fill="url(#hat)" stroke="#1a1a1a" stroke-width="3" /><rect x="1695" y="525" width="95" height="14" fill="url(#hat)" stroke="#1a1a1a" stroke-width="3" /><rect x="1915" y="525" width="202" height="14" fill="url(#hat)" stroke="#1a1a1a" stroke-width="3" /><rect x="590" y="876" width="380" height="14" fill="url(#hat)" stroke="#1a1a1a" stroke-width="4" /><line x1="590" y1="905" x2="1890" y2="905" stroke="#1a1a1a" stroke-width="4" stroke-dasharray="26 10"/><line x1="975" y1="876" x2="1890" y2="876" stroke="#1a1a1a" stroke-width="4" stroke-dasharray="26 10"/><line x1="590" y1="1238" x2="2290" y2="1238" stroke="#1a1a1a" stroke-width="5" stroke-dasharray="30 10"/><line x1="590" y1="1255" x2="2290" y2="1255" stroke="#1a1a1a" stroke-width="4" stroke-dasharray="30 10"/><path d="M1015 540 L1015 625 A80 80 0 0 0 1095 545" fill="none" stroke="#1a1a1a" stroke-width="3"/><line x1="1055" y1="545" x2="1055" y2="595" stroke="#1a1a1a" stroke-width="3"/><path d="M1565 540 L1565 608 A65 65 0 0 0 1630 545 A65 65 0 0 0 1695 608 L1695 540" fill="none" stroke="#1a1a1a" stroke-width="3"/><path d="M1790 540 L1790 608 A62 62 0 0 0 1852 545 A62 62 0 0 0 1915 608 L1915 540" fill="none" stroke="#1a1a1a" stroke-width="3"/><line x1="1630" y1="450" x2="1630" y2="600" stroke="#1a1a1a" stroke-width="3"/><line x1="1852" y1="450" x2="1852" y2="600" stroke="#1a1a1a" stroke-width="3"/><line x1="2010" y1="400" x2="2010" y2="560" stroke="#1a1a1a" stroke-width="3"/><path d="M963 770 A90 80 0 0 1 1055 850 L963 850" fill="none" stroke="#1a1a1a" stroke-width="3"/><rect x="1365" y="900" width="170" height="145" fill="#fff" stroke="#1a1a1a" stroke-width="4" /><rect x="1395" y="950" width="110" height="90" fill="#fff" stroke="#1a1a1a" stroke-width="3" /><rect x="1368" y="905" width="25" height="135" fill="url(#hat)" stroke="#1a1a1a" stroke-width="2" /><rect x="1507" y="905" width="25" height="135" fill="url(#hat)" stroke="#1a1a1a" stroke-width="2" /><rect x="1420" y="912" width="60" height="35" fill="#fff" stroke="#1a1a1a" stroke-width="3" /><line x1="1350" y1="1048" x2="1550" y2="1048" stroke="#1a1a1a" stroke-width="8"/><line x1="1448" y1="990" x2="1448" y2="1140" stroke="#1a1a1a" stroke-width="3"/><text x="1440" y="1090" font-family="Liberation Sans" font-size="19" font-weight="400" fill="#444" text-anchor="middle" transform="rotate(-90 1440 1090)">1,00</text><text x="1478" y="1090" font-family="Liberation Sans" font-size="19" font-weight="400" fill="#444" text-anchor="middle" transform="rotate(-90 1478 1090)">2,10</text><text x="683" y="292" font-family="Liberation Sans" font-size="30" font-weight="700" fill="#222" text-anchor="start">Büros</text><text x="683" y="327" font-family="Liberation Sans" font-size="21" font-weight="400" fill="#222" text-anchor="start">31,24 m²</text><text x="1088" y="292" font-family="Liberation Sans" font-size="30" font-weight="700" fill="#222" text-anchor="start">Büro-Leitung</text><text x="1185" y="327" font-family="Liberation Sans" font-size="21" font-weight="400" fill="#222" text-anchor="start">15,01 m²</text><text x="1690" y="292" font-family="Liberation Sans" font-size="30" font-weight="700" fill="#222" text-anchor="start">Speisesaal</text><text x="1752" y="327" font-family="Liberation Sans" font-size="21" font-weight="400" fill="#222" text-anchor="start">90,46 m²</text><text x="683" y="1055" font-family="Liberation Sans" font-size="30" font-weight="700" fill="#222" text-anchor="start">Büros</text><text x="683" y="1090" font-family="Liberation Sans" font-size="21" font-weight="400" fill="#222" text-anchor="start">32,35 m²</text><text x="1685" y="1055" font-family="Liberation Sans" font-size="30" font-weight="700" fill="#222" text-anchor="start">Lobby</text><text x="1685" y="1090" font-family="Liberation Sans" font-size="21" font-weight="400" fill="#222" text-anchor="start">197,74 m²</text><rect x="825" y="233" width="45" height="22" fill="#fff" stroke="#1a1a1a" stroke-width="3" /><line x1="870" y1="244" x2="985" y2="244" stroke="#1a1a1a" stroke-width="3"/><rect x="1220" y="233" width="45" height="22" fill="#fff" stroke="#1a1a1a" stroke-width="3" /><line x1="1265" y1="244" x2="1380" y2="244" stroke="#1a1a1a" stroke-width="3"/><rect x="2000" y="233" width="45" height="22" fill="#fff" stroke="#1a1a1a" stroke-width="3" /><line x1="2045" y1="244" x2="2160" y2="244" stroke="#1a1a1a" stroke-width="3"/><rect x="825" y="1183" width="45" height="22" fill="#fff" stroke="#1a1a1a" stroke-width="3" /><line x1="870" y1="1194" x2="985" y2="1194" stroke="#1a1a1a" stroke-width="3"/><rect x="1220" y="398" width="22" height="40" fill="#fff" stroke="#1a1a1a" stroke-width="3" /><rect x="2000" y="398" width="22" height="40" fill="#fff" stroke="#1a1a1a" stroke-width="3" /><line x1="475" y1="345" x2="645" y2="345" stroke="#1a1a1a" stroke-width="3"/><text x="510" y="335" font-family="Liberation Sans" font-size="21" font-weight="400" fill="#333" text-anchor="middle">2,00</text><text x="510" y="370" font-family="Liberation Sans" font-size="21" font-weight="400" fill="#333" text-anchor="middle">1,50</text><text x="463" y="345" font-family="Liberation Sans" font-size="20" font-weight="400" fill="#333" text-anchor="middle" transform="rotate(-90 463 345)">21</text><line x1="475" y1="708" x2="645" y2="708" stroke="#1a1a1a" stroke-width="3"/><text x="510" y="698" font-family="Liberation Sans" font-size="21" font-weight="400" fill="#333" text-anchor="middle">2,00</text><text x="510" y="733" font-family="Liberation Sans" font-size="21" font-weight="400" fill="#333" text-anchor="middle">1,50</text><text x="463" y="708" font-family="Liberation Sans" font-size="20" font-weight="400" fill="#333" text-anchor="middle" transform="rotate(-90 463 708)">20</text><line x1="475" y1="1068" x2="645" y2="1068" stroke="#1a1a1a" stroke-width="3"/><text x="510" y="1058" font-family="Liberation Sans" font-size="21" font-weight="400" fill="#333" text-anchor="middle">2,00</text><text x="510" y="1093" font-family="Liberation Sans" font-size="21" font-weight="400" fill="#333" text-anchor="middle">1,50</text><text x="463" y="1068" font-family="Liberation Sans" font-size="20" font-weight="400" fill="#333" text-anchor="middle" transform="rotate(-90 463 1068)">19</text><text x="915" y="797" font-family="Liberation Sans" font-size="21" font-weight="400" fill="#333" text-anchor="middle">1,00</text><text x="915" y="833" font-family="Liberation Sans" font-size="21" font-weight="400" fill="#333" text-anchor="middle">2,10</text><line x1="875" y1="808" x2="1025" y2="808" stroke="#1a1a1a" stroke-width="3"/><line x1="948" y1="780" x2="948" y2="845" stroke="#1a1a1a" stroke-width="3"/><text x="862" y="808" font-family="Liberation Sans" font-size="20" font-weight="400" fill="#333" text-anchor="middle" transform="rotate(-90 862 808)">07</text><text x="1040" y="430" font-family="Liberation Sans" font-size="20" font-weight="400" fill="#333" text-anchor="middle">01</text><text x="1035" y="480" font-family="Liberation Sans" font-size="19" font-weight="400" fill="#444" text-anchor="middle" transform="rotate(-90 1035 480)">1,00</text><text x="1612" y="480" font-family="Liberation Sans" font-size="19" font-weight="400" fill="#444" text-anchor="middle" transform="rotate(-90 1612 480)">1,00</text><text x="1650" y="480" font-family="Liberation Sans" font-size="19" font-weight="400" fill="#444" text-anchor="middle" transform="rotate(-90 1650 480)">2,10</text><text x="1630" y="440" font-family="Liberation Sans" font-size="20" font-weight="400" fill="#333" text-anchor="middle">02</text><text x="1852" y="440" font-family="Liberation Sans" font-size="20" font-weight="400" fill="#333" text-anchor="middle">03</text><text x="1832" y="480" font-family="Liberation Sans" font-size="19" font-weight="400" fill="#444" text-anchor="middle" transform="rotate(-90 1832 480)">1,00</text><text x="1872" y="480" font-family="Liberation Sans" font-size="19" font-weight="400" fill="#444" text-anchor="middle" transform="rotate(-90 1872 480)">2,10</text><line x1="2150" y1="220" x2="2280" y2="220" stroke="#c0c0c0" stroke-width="3"/><line x1="2150" y1="256" x2="2280" y2="256" stroke="#c0c0c0" stroke-width="3"/><line x1="2150" y1="292" x2="2280" y2="292" stroke="#c0c0c0" stroke-width="3"/><line x1="2150" y1="328" x2="2280" y2="328" stroke="#c0c0c0" stroke-width="3"/><line x1="2150" y1="364" x2="2280" y2="364" stroke="#c0c0c0" stroke-width="3"/><line x1="2150" y1="400" x2="2280" y2="400" stroke="#c0c0c0" stroke-width="3"/><line x1="2150" y1="436" x2="2280" y2="436" stroke="#c0c0c0" stroke-width="3"/><line x1="2150" y1="472" x2="2280" y2="472" stroke="#c0c0c0" stroke-width="3"/><line x1="2150" y1="508" x2="2280" y2="508" stroke="#c0c0c0" stroke-width="3"/><line x1="2150" y1="320" x2="2280" y2="460" stroke="#c0c0c0" stroke-width="3"/><line x1="2205" y1="220" x2="2205" y2="520" stroke="#d0d0d0" stroke-width="4"/><circle cx="1805" cy="1192" r="18" fill="#fff" stroke="#1a1a1a" stroke-width="4"/><path d="M1805 1174 A18 18 0 0 1 1823 1192 L1805 1192 Z M1805 1210 A18 18 0 0 1 1787 1192 L1805 1192 Z" fill="#1a1a1a"/><line x1="1805" y1="1160" x2="1805" y2="1225" stroke="#1a1a1a" stroke-width="3"/><line x1="1770" y1="1192" x2="1910" y2="1192" stroke="#1a1a1a" stroke-width="3"/><text x="1850" y="1188" font-family="Liberation Sans" font-size="21" font-weight="400" fill="#333" text-anchor="start">±0,00</text><path d="M1147 643 L1300 545 L1232 505 Z" fill="#d0d0d0" opacity="0.85"/><path d="M1147 643 L1078 505 A83 83 0 1 1 1216 505 Z" fill="#0f85e6"/><path d="M1147 643 L1078 505 A83 83 0 0 1 1147 375 Z" fill="#0a73cf"/><circle cx="1147" cy="458" r="56" fill="#e8e8e8"/><circle cx="1147" cy="458" r="35" fill="#e0400f"/></g></svg>
<div class="a" style="left:1953px;top:820px;width:704px;height:2px;background:transparent;"></div>
<div class="a" style="left:1953px;top:851.7px;width:704px;height:740px;background:#fff;border:2px solid #bac7d4;border-radius:12px;"></div>
<div class="t" id="t59" style="left:1985.0px;top:891.3px;font-size:28px;line-height:28px;font-weight:700;color:#000;transform:scaleX(0.9310);">General attachments (4)</div>
<svg class="a" style="left:2440px;top:889px;" width="32" height="30" viewBox="0 0 32 30"><g fill="#6b6b6b"><circle cx="4" cy="4" r="3.2"/><circle cx="4" cy="14" r="3.2"/><circle cx="4" cy="24" r="3.2"/><rect x="11" y="2" width="19" height="4" rx="2"/><rect x="11" y="12" width="19" height="4" rx="2"/><rect x="11" y="22" width="19" height="4" rx="2"/></g></svg>
<div class="a" style="left:2496px;top:873px;width:60px;height:59px;background:#ebeff3;border-radius:8px;"></div>
<svg class="a" style="left:2510px;top:890px;" width="32" height="28" viewBox="0 0 32 28"><rect x="1.5" y="1.5" width="28" height="24" rx="4" fill="#000"/><g fill="#ebeff3"><rect x="7" y="6" width="4" height="3.5"/><rect x="14" y="6" width="4" height="3.5"/><rect x="21" y="6" width="4" height="3.5"/><rect x="7" y="12" width="4" height="3.5"/><rect x="14" y="12" width="4" height="3.5"/><rect x="21" y="12" width="4" height="3.5"/><rect x="7" y="18" width="4" height="3.5"/><rect x="14" y="18" width="4" height="3.5"/><rect x="21" y="18" width="4" height="3.5"/></g></svg>
<svg class="a" style="left:2577px;top:887px;" width="36" height="32" viewBox="0 0 36 32"><path d="M3 3 L33 3 Q35 3 33.5 5.5 L21 17 L21 28 Q21 31 18 29 L15.5 27 L15 17 L2.5 5.5 Q1 3 3 3 Z" fill="#000"/></svg>
<div class="a" style="left:1984px;top:944px;width:641.5px;height:58px;background:#ebeff3;border:2px solid #bac7d4;border-radius:9px;"></div>
<svg class="a" style="left:2015px;top:959px;" width="30" height="30" viewBox="0 0 30 30"><path d="M15 3 L15 27 M3 15 L27 15" stroke="#000" stroke-width="3.8" stroke-linecap="round"/></svg>
<div class="t" id="t60" style="left:2059.0px;top:961.3px;font-size:28px;line-height:28px;font-weight:400;color:#000;transform:scaleX(0.9950);">Add new attachment</div>
<div class="a" style="left:1984px;top:1031px;width:309.5px;height:239px;background:#ebeff3;border:2px solid #bac7d4;border-radius:9px;"></div>
<svg class="a" style="left:1960px;top:1010px;" width="360" height="280" viewBox="0 0 1662 1293"><rect x="438" y="103" width="777" height="1094" fill="#fff"/><g fill="#555"><rect x="792" y="140" width="92" height="8"/><rect x="797" y="155" width="84" height="7"/><rect x="812" y="168" width="50" height="6"/><rect x="487" y="195" width="145" height="6"/><rect x="487" y="208" width="145" height="6"/></g><rect x="485" y="230" width="710" height="32" fill="#eee" stroke="#444" stroke-width="4" rx="3"/><line x1="515" y1="230" x2="515" y2="262" stroke="#444" stroke-width="3"/><line x1="575" y1="230" x2="575" y2="262" stroke="#444" stroke-width="3"/><line x1="912" y1="230" x2="912" y2="262" stroke="#444" stroke-width="3"/><line x1="975" y1="230" x2="975" y2="262" stroke="#444" stroke-width="3"/><line x1="1012" y1="230" x2="1012" y2="262" stroke="#444" stroke-width="3"/><line x1="1085" y1="230" x2="1085" y2="262" stroke="#444" stroke-width="3"/><rect x="485" y="290" width="710" height="58" fill="none" stroke="#444" stroke-width="4" rx="3"/><line x1="515" y1="290" x2="515" y2="348" stroke="#444" stroke-width="3"/><line x1="575" y1="290" x2="575" y2="348" stroke="#444" stroke-width="3"/><line x1="912" y1="290" x2="912" y2="348" stroke="#444" stroke-width="3"/><line x1="975" y1="290" x2="975" y2="348" stroke="#444" stroke-width="3"/><line x1="1012" y1="290" x2="1012" y2="348" stroke="#444" stroke-width="3"/><line x1="1085" y1="290" x2="1085" y2="348" stroke="#444" stroke-width="3"/><rect x="580" y="302" width="325" height="6" fill="#888"/><rect x="580" y="315" width="325" height="6" fill="#888"/><rect x="580" y="327" width="325" height="6" fill="#888"/><rect x="525" y="316" width="40" height="6" fill="#999"/><rect x="930" y="316" width="35" height="6" fill="#999"/><rect x="985" y="316" width="20" height="6" fill="#aaa"/><rect x="485" y="362" width="710" height="51" fill="none" stroke="#444" stroke-width="4" rx="3"/><line x1="515" y1="362" x2="515" y2="413" stroke="#444" stroke-width="3"/><line x1="575" y1="362" x2="575" y2="413" stroke="#444" stroke-width="3"/><line x1="912" y1="362" x2="912" y2="413" stroke="#444" stroke-width="3"/><line x1="975" y1="362" x2="975" y2="413" stroke="#444" stroke-width="3"/><line x1="1012" y1="362" x2="1012" y2="413" stroke="#444" stroke-width="3"/><line x1="1085" y1="362" x2="1085" y2="413" stroke="#444" stroke-width="3"/><rect x="580" y="374" width="325" height="6" fill="#888"/><rect x="580" y="384" width="325" height="6" fill="#888"/><rect x="580" y="395" width="325" height="6" fill="#888"/><rect x="525" y="384" width="40" height="6" fill="#999"/><rect x="930" y="384" width="35" height="6" fill="#999"/><rect x="985" y="384" width="20" height="6" fill="#aaa"/><rect x="485" y="427" width="710" height="35" fill="none" stroke="#444" stroke-width="4" rx="3"/><line x1="515" y1="427" x2="515" y2="462" stroke="#444" stroke-width="3"/><line x1="575" y1="427" x2="575" y2="462" stroke="#444" stroke-width="3"/><line x1="912" y1="427" x2="912" y2="462" stroke="#444" stroke-width="3"/><line x1="975" y1="427" x2="975" y2="462" stroke="#444" stroke-width="3"/><line x1="1012" y1="427" x2="1012" y2="462" stroke="#444" stroke-width="3"/><line x1="1085" y1="427" x2="1085" y2="462" stroke="#444" stroke-width="3"/><rect x="580" y="439" width="325" height="6" fill="#888"/><rect x="580" y="446" width="325" height="6" fill="#888"/><rect x="525" y="442" width="40" height="6" fill="#999"/><rect x="930" y="442" width="35" height="6" fill="#999"/><rect x="985" y="442" width="20" height="6" fill="#aaa"/><rect x="485" y="475" width="710" height="37" fill="none" stroke="#444" stroke-width="4" rx="3"/><line x1="515" y1="475" x2="515" y2="512" stroke="#444" stroke-width="3"/><line x1="575" y1="475" x2="575" y2="512" stroke="#444" stroke-width="3"/><line x1="912" y1="475" x2="912" y2="512" stroke="#444" stroke-width="3"/><line x1="975" y1="475" x2="975" y2="512" stroke="#444" stroke-width="3"/><line x1="1012" y1="475" x2="1012" y2="512" stroke="#444" stroke-width="3"/><line x1="1085" y1="475" x2="1085" y2="512" stroke="#444" stroke-width="3"/><rect x="580" y="487" width="325" height="6" fill="#888"/><rect x="580" y="496" width="325" height="6" fill="#888"/><rect x="525" y="490" width="40" height="6" fill="#999"/><rect x="930" y="490" width="35" height="6" fill="#999"/><rect x="985" y="490" width="20" height="6" fill="#aaa"/><rect x="485" y="542" width="710" height="56" fill="none" stroke="#444" stroke-width="4" rx="3"/><line x1="515" y1="542" x2="515" y2="598" stroke="#444" stroke-width="3"/><line x1="575" y1="542" x2="575" y2="598" stroke="#444" stroke-width="3"/><line x1="912" y1="542" x2="912" y2="598" stroke="#444" stroke-width="3"/><line x1="975" y1="542" x2="975" y2="598" stroke="#444" stroke-width="3"/><line x1="1012" y1="542" x2="1012" y2="598" stroke="#444" stroke-width="3"/><line x1="1085" y1="542" x2="1085" y2="598" stroke="#444" stroke-width="3"/><rect x="580" y="554" width="325" height="6" fill="#888"/><rect x="580" y="566" width="325" height="6" fill="#888"/><rect x="580" y="578" width="325" height="6" fill="#888"/><rect x="525" y="567" width="40" height="6" fill="#999"/><rect x="930" y="567" width="35" height="6" fill="#999"/><rect x="985" y="567" width="20" height="6" fill="#aaa"/><rect x="485" y="607" width="710" height="55" fill="none" stroke="#444" stroke-width="4" rx="3"/><line x1="515" y1="607" x2="515" y2="662" stroke="#444" stroke-width="3"/><line x1="575" y1="607" x2="575" y2="662" stroke="#444" stroke-width="3"/><line x1="912" y1="607" x2="912" y2="662" stroke="#444" stroke-width="3"/><line x1="975" y1="607" x2="975" y2="662" stroke="#444" stroke-width="3"/><line x1="1012" y1="607" x2="1012" y2="662" stroke="#444" stroke-width="3"/><line x1="1085" y1="607" x2="1085" y2="662" stroke="#444" stroke-width="3"/><rect x="580" y="619" width="325" height="6" fill="#888"/><rect x="580" y="631" width="325" height="6" fill="#888"/><rect x="580" y="642" width="325" height="6" fill="#888"/><rect x="525" y="632" width="40" height="6" fill="#999"/><rect x="930" y="632" width="35" height="6" fill="#999"/><rect x="985" y="632" width="20" height="6" fill="#aaa"/><rect x="485" y="690" width="710" height="55" fill="none" stroke="#444" stroke-width="4" rx="3"/><line x1="515" y1="690" x2="515" y2="745" stroke="#444" stroke-width="3"/><line x1="575" y1="690" x2="575" y2="745" stroke="#444" stroke-width="3"/><line x1="912" y1="690" x2="912" y2="745" stroke="#444" stroke-width="3"/><line x1="975" y1="690" x2="975" y2="745" stroke="#444" stroke-width="3"/><line x1="1012" y1="690" x2="1012" y2="745" stroke="#444" stroke-width="3"/><line x1="1085" y1="690" x2="1085" y2="745" stroke="#444" stroke-width="3"/><rect x="580" y="702" width="325" height="6" fill="#888"/><rect x="580" y="714" width="325" height="6" fill="#888"/><rect x="580" y="725" width="325" height="6" fill="#888"/><rect x="525" y="714" width="40" height="6" fill="#999"/><rect x="930" y="714" width="35" height="6" fill="#999"/><rect x="985" y="714" width="20" height="6" fill="#aaa"/><rect x="485" y="755" width="710" height="55" fill="none" stroke="#444" stroke-width="4" rx="3"/><line x1="515" y1="755" x2="515" y2="810" stroke="#444" stroke-width="3"/><line x1="575" y1="755" x2="575" y2="810" stroke="#444" stroke-width="3"/><line x1="912" y1="755" x2="912" y2="810" stroke="#444" stroke-width="3"/><line x1="975" y1="755" x2="975" y2="810" stroke="#444" stroke-width="3"/><line x1="1012" y1="755" x2="1012" y2="810" stroke="#444" stroke-width="3"/><line x1="1085" y1="755" x2="1085" y2="810" stroke="#444" stroke-width="3"/><rect x="580" y="767" width="325" height="6" fill="#888"/><rect x="580" y="779" width="325" height="6" fill="#888"/><rect x="580" y="790" width="325" height="6" fill="#888"/><rect x="525" y="780" width="40" height="6" fill="#999"/><rect x="930" y="780" width="35" height="6" fill="#999"/><rect x="985" y="780" width="20" height="6" fill="#aaa"/><rect x="485" y="820" width="710" height="57" fill="none" stroke="#444" stroke-width="4" rx="3"/><line x1="515" y1="820" x2="515" y2="877" stroke="#444" stroke-width="3"/><line x1="575" y1="820" x2="575" y2="877" stroke="#444" stroke-width="3"/><line x1="912" y1="820" x2="912" y2="877" stroke="#444" stroke-width="3"/><line x1="975" y1="820" x2="975" y2="877" stroke="#444" stroke-width="3"/><line x1="1012" y1="820" x2="1012" y2="877" stroke="#444" stroke-width="3"/><line x1="1085" y1="820" x2="1085" y2="877" stroke="#444" stroke-width="3"/><rect x="580" y="832" width="325" height="6" fill="#888"/><rect x="580" y="844" width="325" height="6" fill="#888"/><rect x="580" y="857" width="325" height="6" fill="#888"/><rect x="525" y="846" width="40" height="6" fill="#999"/><rect x="930" y="846" width="35" height="6" fill="#999"/><rect x="985" y="846" width="20" height="6" fill="#aaa"/><rect x="485" y="887" width="710" height="66" fill="none" stroke="#444" stroke-width="4" rx="3"/><line x1="515" y1="887" x2="515" y2="953" stroke="#444" stroke-width="3"/><line x1="575" y1="887" x2="575" y2="953" stroke="#444" stroke-width="3"/><line x1="912" y1="887" x2="912" y2="953" stroke="#444" stroke-width="3"/><line x1="975" y1="887" x2="975" y2="953" stroke="#444" stroke-width="3"/><line x1="1012" y1="887" x2="1012" y2="953" stroke="#444" stroke-width="3"/><line x1="1085" y1="887" x2="1085" y2="953" stroke="#444" stroke-width="3"/><rect x="580" y="899" width="325" height="6" fill="#888"/><rect x="580" y="910" width="325" height="6" fill="#888"/><rect x="580" y="922" width="325" height="6" fill="#888"/><rect x="580" y="934" width="325" height="6" fill="#888"/><rect x="525" y="917" width="40" height="6" fill="#999"/><rect x="930" y="917" width="35" height="6" fill="#999"/><rect x="985" y="917" width="20" height="6" fill="#aaa"/><g opacity="0.35"><rect x="485" y="965" width="710" height="60" fill="none" stroke="#444" stroke-width="4" rx="3"/><line x1="515" y1="965" x2="515" y2="1025" stroke="#444" stroke-width="3"/><line x1="575" y1="965" x2="575" y2="1025" stroke="#444" stroke-width="3"/><line x1="912" y1="965" x2="912" y2="1025" stroke="#444" stroke-width="3"/><line x1="975" y1="965" x2="975" y2="1025" stroke="#444" stroke-width="3"/><line x1="1012" y1="965" x2="1012" y2="1025" stroke="#444" stroke-width="3"/><line x1="1085" y1="965" x2="1085" y2="1025" stroke="#444" stroke-width="3"/><rect x="580" y="977" width="325" height="6" fill="#888"/><rect x="580" y="990" width="325" height="6" fill="#888"/><rect x="580" y="1004" width="325" height="6" fill="#888"/><rect x="525" y="992" width="40" height="6" fill="#999"/><rect x="930" y="992" width="35" height="6" fill="#999"/><rect x="985" y="992" width="20" height="6" fill="#aaa"/><rect x="485" y="1040" width="710" height="65" fill="none" stroke="#444" stroke-width="4" rx="3"/><line x1="515" y1="1040" x2="515" y2="1105" stroke="#444" stroke-width="3"/><line x1="575" y1="1040" x2="575" y2="1105" stroke="#444" stroke-width="3"/><line x1="912" y1="1040" x2="912" y2="1105" stroke="#444" stroke-width="3"/><line x1="975" y1="1040" x2="975" y2="1105" stroke="#444" stroke-width="3"/><line x1="1012" y1="1040" x2="1012" y2="1105" stroke="#444" stroke-width="3"/><line x1="1085" y1="1040" x2="1085" y2="1105" stroke="#444" stroke-width="3"/><rect x="580" y="1052" width="325" height="6" fill="#888"/><rect x="580" y="1067" width="325" height="6" fill="#888"/><rect x="580" y="1082" width="325" height="6" fill="#888"/><rect x="525" y="1070" width="40" height="6" fill="#999"/><rect x="930" y="1070" width="35" height="6" fill="#999"/><rect x="985" y="1070" width="20" height="6" fill="#aaa"/></g><g fill="#444"><rect x="530" y="282" width="30" height="7"/><rect x="578" y="282" width="72" height="7"/><rect x="530" y="532" width="30" height="7"/><rect x="578" y="532" width="160" height="7"/><rect x="535" y="682" width="25" height="7"/><rect x="578" y="682" width="160" height="7"/><rect x="815" y="1168" width="45" height="6" fill="#999"/></g></svg>
<div class="a" style="left:2244px;top:1033px;width:47px;height:47px;background:#f5f7f9;border-radius:0 8px 0 10px;"></div>
<svg class="a" style="left:2254px;top:1043px;" width="30" height="28" viewBox="0 0 30 28"><path d="M22 4 A11 11 0 1 0 24 19" fill="none" stroke="#000" stroke-width="3.2" stroke-linecap="round"/><path d="M9 19 L10 14 L22 2 Q23.5 1 25 2.5 L26.5 4 Q27.5 5.5 26.5 6.5 L14.5 18.5 Z" fill="#000" stroke="#f5f7f9" stroke-width="1.6"/></svg>
<div class="a" style="left:1994px;top:1216.8px;width:232px;height:44px;background:rgba(255,255,255,0.88);border-radius:7px;"></div>
<div class="t" id="t61" style="left:2005.0px;top:1228.7px;font-size:24px;line-height:24px;font-weight:400;color:#000;transform:scaleX(1.0090);">Bill of quantities.pdf</div>
<div class="a" style="left:1991px;top:1037px;width:56px;height:56px;background:#ff8a00;border-radius:50%;"></div>
<div class="t" id="t62" style="left:2010.5px;top:1049.9px;font-size:30px;line-height:30px;font-weight:400;color:#000;transform:scaleX(1.0187);">3</div>
<svg class="a" style="left:2300px;top:1020px;" width="360" height="270" viewBox="0 0 1724 1293"><defs><clipPath id="p2"><rect x="80" y="55" width="1478" height="1143" rx="38"/></clipPath></defs><g clip-path="url(#p2)"><defs><linearGradient id="tbl" x1="430" y1="0" x2="1550" y2="0" gradientUnits="userSpaceOnUse"><stop offset="0" stop-color="#a07c60"/><stop offset="0.4" stop-color="#b39478"/><stop offset="0.75" stop-color="#d8c6b4"/><stop offset="1" stop-color="#ebe0d6"/></linearGradient><linearGradient id="gl" x1="0" y1="200" x2="0" y2="770" gradientUnits="userSpaceOnUse"><stop offset="0" stop-color="#dde9d6"/><stop offset="0.5" stop-color="#a9c69c"/><stop offset="1" stop-color="#7fa676"/></linearGradient></defs><rect x="80" y="55" width="1480" height="1145" fill="#f3f3f3"/><rect x="80" y="55" width="1480" height="60" fill="#fafafa"/><polygon points="80,110 810,235 810,650 80,760" fill="#efefef"/><rect x="815" y="230" width="150" height="470" fill="#fbfbfb"/><polygon points="845,290 950,262 950,680 845,660" fill="url(#gl)"/><polygon points="820,230 960,195 960,262 820,298" fill="#8cc63f"/><rect x="1130" y="62" width="420" height="800" fill="#f7f7f7"/><polygon points="1195,215 1475,120 1470,770 1195,720" fill="url(#gl)"/><line x1="1165" y1="445" x2="1470" y2="430" stroke="#f2f2f2" stroke-width="12"/><line x1="1180" y1="220" x2="1180" y2="720" stroke="#dcdcdc" stroke-width="14"/><polygon points="1140,120 1290,62 1510,62 1510,95 1140,215" fill="#8cc63f"/><rect x="1470" y="62" width="80" height="800" fill="#ececec"/><rect x="606" y="80" width="10" height="130" fill="#b5b5b5"/><path d="M560 285 Q560 205 610 205 Q660 205 660 285 Z" fill="#e0e0e0"/><path d="M795 62 L955 62 Q955 155 875 155 Q795 155 795 62 Z" fill="#e9e9e9"/><polygon points="80,800 450,790 560,1000 640,1197 80,1197" fill="#d29a5c"/><polygon points="85,760 440,745 455,790 85,800" fill="#b97b44"/><polygon points="1370,1000 1557,985 1557,1197 1120,1197" fill="#d09a60"/><rect x="530" y="1150" width="600" height="47" fill="#6a5040"/><polygon points="430,648 790,645 1550,870 1550,935 1380,1000 1120,1160 640,1160 480,720" fill="url(#tbl)"/><polygon points="1380,1000 1550,935 1550,950 1390,1015" fill="#a88060"/><polygon points="355,643 425,640 435,662 362,668" fill="#3d7a38"/><polygon points="385,698 470,690 495,738 405,745" fill="#5078a8"/><path d="M480 740 L500 780 L430 800" fill="none" stroke="#ddd" stroke-width="14"/><polygon points="450,790 560,780 620,860 515,880" fill="#5279a8"/><path d="M400 890 L520 895 L560 860" fill="none" stroke="#2a2a2a" stroke-width="8"/><path d="M540 880 L600 900 L620 1000" fill="none" stroke="#f0f0f0" stroke-width="22"/><polygon points="1075,735 1190,722 1270,768 1225,792 1095,762" fill="#2c5a9c"/><polygon points="845,670 925,675 922,695 848,690" fill="#2d3d55"/><ellipse cx="828" cy="732" rx="42" ry="18" fill="#2e3a48"/><ellipse cx="1500" cy="892" rx="42" ry="18" fill="#3a4858"/><line x1="690" y1="700" x2="790" y2="745" stroke="#777" stroke-width="6"/><rect x="320" y="700" width="35" height="20" fill="#cfcfcf"/></g><rect x="80" y="55" width="1478" height="1143" rx="38" fill="none" stroke="#bac7d4" stroke-width="9"/></svg>
<div class="a" style="left:2326px;top:1217px;width:260px;height:44px;background:rgba(255,255,255,0.82);border-radius:7px;"></div>
<div class="t" id="t63" style="left:2337.0px;top:1228.3px;font-size:24px;line-height:24px;font-weight:400;color:#000;transform:scaleX(1.0518);">19/02/2025 01:49 pm</div>
<svg class="a" style="left:1970px;top:1280px;" width="700" height="300" viewBox="0 0 2576 1104"><defs><clipPath id="p3"><rect x="55" y="43" width="1133" height="875" rx="30"/></clipPath><clipPath id="p4"><rect x="1277" y="43" width="1135" height="875" rx="30"/></clipPath></defs><g clip-path="url(#p3)"><g transform="translate(51.5 36.8) scale(0.6831)"><defs><linearGradient id="fr1" x1="185" y1="0" x2="420" y2="0" gradientUnits="userSpaceOnUse"><stop offset="0" stop-color="#878274"/><stop offset="0.25" stop-color="#c6c3b6"/><stop offset="0.7" stop-color="#c2beb0"/><stop offset="1" stop-color="#9d998b"/></linearGradient><linearGradient id="fr2" x1="800" y1="0" x2="1030" y2="0" gradientUnits="userSpaceOnUse"><stop offset="0" stop-color="#c4c0b2"/><stop offset="0.25" stop-color="#908c7e"/><stop offset="0.8" stop-color="#8c887a"/><stop offset="1" stop-color="#bdb9ab"/></linearGradient><linearGradient id="fr3" x1="1430" y1="0" x2="1670" y2="0" gradientUnits="userSpaceOnUse"><stop offset="0" stop-color="#c0bcae"/><stop offset="0.3" stop-color="#958f80"/><stop offset="1" stop-color="#857f70"/></linearGradient><linearGradient id="rad" x1="0" y1="780" x2="0" y2="1280" gradientUnits="userSpaceOnUse"><stop offset="0" stop-color="#d5d1c4"/><stop offset="0.1" stop-color="#b8b3a3"/><stop offset="0.45" stop-color="#a09b8b"/><stop offset="0.75" stop-color="#857f71"/><stop offset="1" stop-color="#5a564c"/></linearGradient></defs><rect x="0" y="0" width="1680" height="1300" fill="#8e8a7c"/><rect x="0" y="0" width="190" height="780" fill="#a39f90"/><rect x="0" y="80" width="185" height="110" fill="#8b8576"/><rect x="0" y="250" width="185" height="400" fill="#aaa595"/><rect x="0" y="610" width="40" height="150" fill="#1f2535"/><rect x="30" y="690" width="150" height="30" fill="#2d3038"/><rect x="185" y="0" width="235" height="790" fill="url(#fr1)"/><rect x="420" y="0" width="380" height="410" fill="#a8acb0"/><polygon points="420,180 560,260 665,380 420,405" fill="#b4ab96"/><rect x="420" y="403" width="380" height="27" fill="#3a3a38"/><rect x="420" y="430" width="380" height="290" fill="#d4cdb4"/><rect x="670" y="430" width="130" height="140" fill="#d9e3e8"/><ellipse cx="735" cy="640" rx="85" ry="90" fill="#b2b08c"/><rect x="800" y="0" width="230" height="790" fill="url(#fr2)"/><rect x="1030" y="0" width="420" height="450" fill="#cdcbc6"/><rect x="1030" y="60" width="420" height="120" fill="#a08c82"/><rect x="1140" y="100" width="40" height="60" fill="#d8dcdc"/><rect x="1260" y="100" width="40" height="60" fill="#d8dcdc"/><rect x="1380" y="100" width="40" height="60" fill="#d8dcdc"/><rect x="1030" y="180" width="420" height="40" fill="#c2bfb8"/><g stroke="#dedcd8" stroke-width="4"><line x1="1030" y1="200" x2="1450" y2="200"/><line x1="1030" y1="218" x2="1450" y2="218"/><line x1="1030" y1="236" x2="1450" y2="236"/><line x1="1030" y1="254" x2="1450" y2="254"/><line x1="1030" y1="272" x2="1450" y2="272"/><line x1="1030" y1="290" x2="1450" y2="290"/><line x1="1030" y1="308" x2="1450" y2="308"/><line x1="1030" y1="326" x2="1450" y2="326"/><line x1="1030" y1="344" x2="1450" y2="344"/><line x1="1030" y1="362" x2="1450" y2="362"/><line x1="1030" y1="380" x2="1450" y2="380"/><line x1="1030" y1="398" x2="1450" y2="398"/><line x1="1030" y1="416" x2="1450" y2="416"/><line x1="1030" y1="434" x2="1450" y2="434"/></g><rect x="1030" y="450" width="400" height="280" fill="#cdc6be"/><ellipse cx="1140" cy="560" rx="110" ry="170" fill="#b88585" opacity="0.85"/><ellipse cx="1320" cy="620" rx="90" ry="120" fill="#9cc070"/><rect x="1430" y="0" width="250" height="800" fill="url(#fr3)"/><rect x="420" y="0" width="380" height="722" fill="none" stroke="#cbc7b9" stroke-width="16"/><rect x="1030" y="0" width="410" height="735" fill="none" stroke="#cbc7b9" stroke-width="16"/><rect x="0" y="720" width="1680" height="65" fill="#c6c2b4"/><rect x="0" y="780" width="1680" height="500" fill="url(#rad)"/><rect x="170" y="800" width="70" height="200" fill="#bdb8a9" opacity="0.7"/><rect x="860" y="800" width="70" height="200" fill="#bdb8a9" opacity="0.7"/><rect x="0" y="1200" width="1680" height="100" fill="#2a2a26"/><polygon points="1170,990 1390,985 1390,1080 1200,1080" fill="#e6e4e0"/><path d="M1345 700 Q1345 670 1400 670 L1620 672 Q1670 680 1670 720 L1670 1300 L1400 1300 Q1380 900 1345 700 Z" fill="#1e2538"/></g></g><g clip-path="url(#p4)"><rect x="1277" y="43" width="1137" height="877" fill="#efefef"/><g transform="translate(1273.3 36.8) scale(0.6831)"><rect x="0" y="0" width="810" height="280" fill="#e8e5e1"/><rect x="875" y="0" width="800" height="280" fill="#f1f1f1"/><rect x="0" y="345" width="1680" height="430" fill="#f2f2f2"/><rect x="0" y="855" width="1680" height="450" fill="#f3f3f3"/><path d="M0 265 Q300 268 640 262 Q740 200 800 210 L880 212 Q950 230 1000 262 Q1300 268 1680 270 L1680 350 Q1300 345 900 352 Q500 348 0 355 Z" fill="#8e8c87"/><path d="M0 775 Q500 768 900 772 Q1300 766 1680 770 L1680 855 Q1300 860 900 858 Q500 862 0 858 Z" fill="#8e8c87"/><rect x="805" y="0" width="75" height="280" fill="#8f8d88"/><rect x="150" y="340" width="85" height="440" fill="#8c8a85"/><rect x="1470" y="345" width="80" height="435" fill="#8c8a85"/><rect x="810" y="850" width="80" height="450" fill="#8a8884"/><path d="M865 15 L880 180 L860 300 L855 420 L885 530 L870 620 L920 740 L915 800 L890 900 L890 1290" fill="none" stroke="#111" stroke-width="6"/></g></g><rect x="55" y="43" width="1133" height="875" rx="30" fill="none" stroke="#bac7d4" stroke-width="7"/><rect x="1277" y="43" width="1135" height="875" rx="30" fill="none" stroke="#bac7d4" stroke-width="7"/></svg>
<div class="a" style="left:1994px;top:1477.6px;width:260px;height:43.2px;background:rgba(238,238,238,0.85);border-radius:7px;"></div>
<div class="t" id="t64" style="left:2005.3px;top:1487.6px;font-size:24px;line-height:24px;font-weight:400;color:#000;transform:scaleX(1.0478);">19/02/2025 01:49 pm</div>
<div class="a" style="left:2326px;top:1477.6px;width:259.5px;height:43.2px;background:rgba(255,255,255,0.85);border-radius:7px;"></div>
<div class="t" id="t65" style="left:2337.0px;top:1487.6px;font-size:24px;line-height:24px;font-weight:400;color:#000;transform:scaleX(1.0509);">19/02/2025 01:49 pm</div>
<div class="a" style="left:1984px;top:1562px;width:641.5px;height:60px;border:2px solid #bac7d4;border-radius:9px;"></div>
<div class="a" style="left:1970.5px;top:1019px;width:332px;height:261.7px;border:6px solid #ff8a00;border-radius:12px;"></div>
<svg class="a" style="left:1800px;top:740px;" width="200" height="300" viewBox="0 0 200 300"><line x1="21" y1="26" x2="154" y2="244" stroke="#ff8a00" stroke-width="12.5" stroke-linecap="round"/><path d="M137 255 L171.7 233.8 L172.5 273 Z" fill="#ff8a00" stroke="#ff8a00" stroke-width="3" stroke-linejoin="round"/></svg>
<div class="a" style="left:752px;top:1565px;width:1995px;height:99px;background:#fff;border-radius:0 0 10px 10px;box-shadow:0 -6px 14px rgba(0,0,0,0.045);"></div>
<div class="a" style="left:2216px;top:1585px;width:240px;height:60px;background:#bfdaee;border-radius:10px;"></div>
<div class="t" id="t66" style="left:2308.0px;top:1602.9px;font-size:28px;line-height:28px;font-weight:400;color:#fff;transform:scaleX(0.8774);">Save</div>
<div class="a" style="left:2476px;top:1585px;width:239.5px;height:60px;background:#fff;border:2px solid #bac7d4;border-radius:10px;"></div>
<div class="t" id="t67" style="left:2562.8px;top:1602.9px;font-size:28px;line-height:28px;font-weight:400;color:#000;transform:scaleX(0.9275);">Close</div>
<div class="a" style="left:0px;top:-10px;width:3420px;height:1726px;border:2px solid rgba(255,255,255,0.2);border-top:none;border-radius:0 0 40px 40px;"></div>
</div>
</body></html>
